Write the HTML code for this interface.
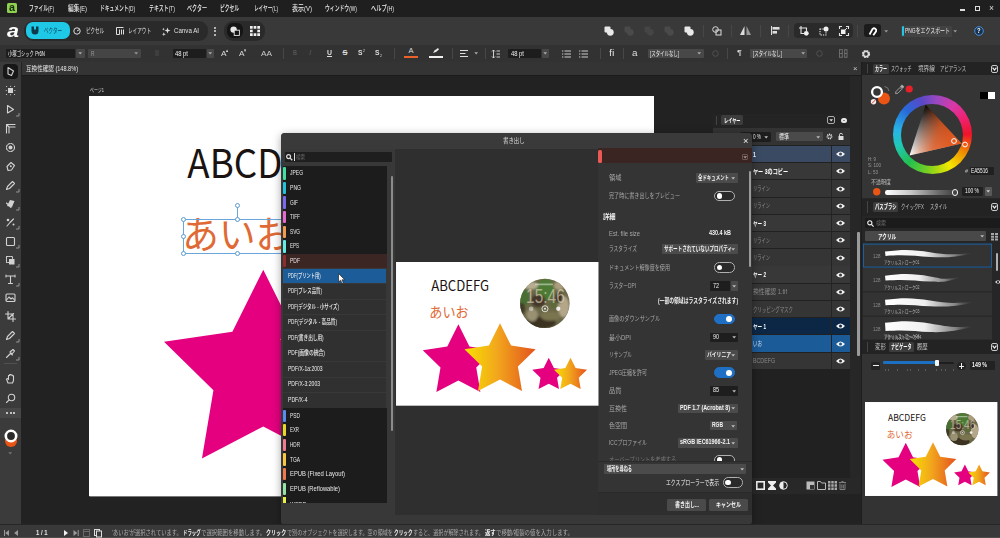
<!DOCTYPE html>
<html lang="ja">
<head>
<meta charset="utf-8">
<title>書き出し</title>
<style>
*{box-sizing:border-box;margin:0;padding:0}
html,body{width:1000px;height:538px;overflow:hidden;background:#222}
body{font-family:"Liberation Sans","Noto Sans CJK JP",sans-serif;font-size:7px;color:#ddd;position:relative;line-height:1}
.a{position:absolute}
.t{position:absolute;white-space:nowrap;transform-origin:0 50%}
svg{position:absolute;overflow:visible}
#menubar{left:0;top:0;width:1000px;height:17px;background:#1f1f1f}
#toolbar{left:0;top:17px;width:1000px;height:28px;background:#393939}
#ctxbar{left:0;top:45px;width:1000px;height:17px;background:#323232}
#tools{left:0;top:62px;width:21px;height:462px;background:#3b3b3b}
#tabbar{left:21.5px;top:61.7px;width:839.5px;height:13.3px;background:#343434}
#canvas{left:21.5px;top:75px;width:840px;height:449px;background:#222222}
#status{left:0;top:524.5px;width:1000px;height:13.5px;background:#393939}
#page{left:89.3px;top:96px;width:565.2px;height:400.4px;background:#fff;overflow:hidden}
#right{left:863px;top:62px;width:137px;height:462px;background:#333}
.fld{position:absolute;background:#1d1d1d;border-radius:1px}
.sel{position:absolute;background:#484848;border-radius:1px}
.sep{position:absolute;width:1px;background:#474747}
.tog{position:absolute;width:20.6px;height:10.6px;border-radius:5.3px;border:1px solid #b0b0b0;background:#2a2a2a}
.tog i{position:absolute;left:1.6px;top:1.4px;width:5.8px;height:5.8px;border-radius:50%;background:#fff}
.tog.on{background:#1f6fc4;border-color:#1f6fc4}
.tog.on i{left:11.2px}
</style>
</head>
<body>

<div id="menubar" class="a"></div>
<div class="a" style="left:7px;top:3px;width:10px;height:10px;background:#8fd14f;border-radius:1.5px"></div>
<div class="t" style="left:9px;top:1.0px;height:14.0px;line-height:14.0px;font-size:10px;color:#143010;font-weight:bold;transform:scaleX(1.079);">a</div>
<div class="t" style="left:29px;top:3.8px;height:10.5px;line-height:10.5px;font-size:7.5px;color:#ececec;font-weight:500;transform:scaleX(0.632);">ファイル(F)</div>
<div class="t" style="left:68px;top:3.8px;height:10.5px;line-height:10.5px;font-size:7.5px;color:#ececec;font-weight:500;transform:scaleX(0.760);">編集(E)</div>
<div class="t" style="left:100px;top:3.8px;height:10.5px;line-height:10.5px;font-size:7.5px;color:#ececec;font-weight:500;transform:scaleX(0.632);">ドキュメント(D)</div>
<div class="t" style="left:149px;top:3.8px;height:10.5px;line-height:10.5px;font-size:7.5px;color:#ececec;font-weight:500;transform:scaleX(0.661);">テキスト(T)</div>
<div class="t" style="left:187px;top:3.8px;height:10.5px;line-height:10.5px;font-size:7.5px;color:#ececec;font-weight:500;transform:scaleX(0.673);">ベクター</div>
<div class="t" style="left:220px;top:3.8px;height:10.5px;line-height:10.5px;font-size:7.5px;color:#ececec;font-weight:500;transform:scaleX(0.633);">ピクセル</div>
<div class="t" style="left:254px;top:3.8px;height:10.5px;line-height:10.5px;font-size:7.5px;color:#ececec;font-weight:500;transform:scaleX(0.616);">レイヤー(L)</div>
<div class="t" style="left:292px;top:3.8px;height:10.5px;line-height:10.5px;font-size:7.5px;color:#ececec;font-weight:500;transform:scaleX(0.800);">表示(V)</div>
<div class="t" style="left:325px;top:3.8px;height:10.5px;line-height:10.5px;font-size:7.5px;color:#ececec;font-weight:500;transform:scaleX(0.645);">ウィンドウ(W)</div>
<div class="t" style="left:371px;top:3.8px;height:10.5px;line-height:10.5px;font-size:7.5px;color:#ececec;font-weight:500;transform:scaleX(0.699);">ヘルプ(H)</div>
<div class="a" style="left:960px;top:9px;width:5px;height:1.5px;background:#ddd;"></div>
<div class="a" style="left:975px;top:5.5px;width:5px;height:5px;border:1px solid #ddd"></div>
<div class="t" style="left:989px;top:1.7px;height:12.6px;line-height:12.6px;font-size:9px;color:#ddd;transform:scaleX(0.950);">×</div>
<div id="toolbar" class="a"></div>
<div class="t" style="left:7px;top:17.7px;height:26.6px;line-height:26.6px;font-size:19px;color:#fff;font-weight:bold;transform:scaleX(1.134);font-style:italic;">a</div>
<div class="a" style="left:24px;top:21px;width:184px;height:20px;background:#2a2a2a;border-radius:9px"></div>
<div class="a" style="left:26px;top:22px;width:44px;height:17px;background:#1ec8e6;border-radius:7px"></div>
<svg style="left:31px;top:26px" width="8" height="9" viewBox="0 0 8 9"><path d="M0.5 0.5 H3 V3.5 H5 V0.5 H7.5 V5 Q7.5 8.5 4 8.5 Q0.5 8.5 0.5 5 Z" fill="#0c3a4a"/></svg>
<div class="t" style="left:44px;top:26.1px;height:9.8px;line-height:9.8px;font-size:7px;color:#0e4a5c;transform:scaleX(0.649);">ベクター</div>
<svg style="left:73px;top:27px" width="8" height="8" viewBox="0 0 8 8"><circle cx="4" cy="4" r="3.2" fill="none" stroke="#ddd" stroke-width="1"/><path d="M4 4 L6.5 2.5" stroke="#ddd" stroke-width="1"/></svg>
<div class="t" style="left:86px;top:26.1px;height:9.8px;line-height:9.8px;font-size:7px;color:#e0e0e0;transform:scaleX(0.643);">ピクセル</div>
<svg style="left:116px;top:27px" width="8" height="8" viewBox="0 0 8 8"><path d="M0.5 0.5 H7.5 M0.5 0.5 V7.5 H3.5 V2.5 M5.5 2.5 V7.5 M7.5 2.5 V7.5" fill="none" stroke="#ddd" stroke-width="1"/></svg>
<div class="t" style="left:128px;top:26.1px;height:9.8px;line-height:9.8px;font-size:7px;color:#e0e0e0;transform:scaleX(0.657);">レイアウト</div>
<svg style="left:162px;top:27px" width="9" height="9" viewBox="0 0 9 9"><path d="M5.5 0.5 L6.3 2.7 L8.5 3.5 L6.3 4.3 L5.5 6.5 L4.7 4.3 L2.5 3.5 L4.7 2.7 Z M1.8 5.2 L2.3 6.7 L3.8 7.2 L2.3 7.7 L1.8 9 L1.3 7.7 L0 7.2 L1.3 6.7Z M1.5 0.8 L1.9 1.8 L2.9 2.2 L1.9 2.6 L1.5 3.6 L1.1 2.6 L0.1 2.2 L1.1 1.8Z" fill="#e0e0e0"/></svg>
<div class="t" style="left:174px;top:26.1px;height:9.8px;line-height:9.8px;font-size:7px;color:#e0e0e0;transform:scaleX(0.880);">Canva AI</div>
<div class="a" style="left:214px;top:26.5px;width:2px;height:2px;background:#ddd;border-radius:1px"></div>
<div class="a" style="left:214px;top:30px;width:2px;height:2px;background:#ddd;border-radius:1px"></div>
<div class="a" style="left:214px;top:33.5px;width:2px;height:2px;background:#ddd;border-radius:1px"></div>
<div class="a" style="left:224px;top:21px;width:41px;height:20px;background:#2a2a2a;border-radius:9px"></div>
<div class="a" style="left:227px;top:23px;width:16px;height:15px;background:#151515;border-radius:6px"></div>
<svg style="left:230px;top:26px" width="10" height="10" viewBox="0 0 10 10"><circle cx="3.6" cy="3.6" r="3.2" fill="#e8e8e8"/><rect x="4.2" y="4.2" width="5.2" height="5.2" fill="#151515" stroke="#e8e8e8" stroke-width="0.9"/></svg>
<svg style="left:250px;top:26px" width="10" height="10" viewBox="0 0 10 10"><path d="M0 0H2.7V2.7H0Z M3.65 0H6.35V2.7H3.65Z M7.3 0H10V2.7H7.3Z M0 3.65H2.7V6.35H0Z M7.3 3.65H10V6.35H7.3Z M0 7.3H2.7V10H0Z M3.65 7.3H6.35V10H3.65Z M7.3 7.3H10V10H7.3Z" fill="#f0f0f0"/></svg>
<svg style="left:604px;top:26px" width="10" height="10" viewBox="0 0 10 10"><rect x="0.5" y="0.5" width="6" height="6" rx="1" fill="#e8e8e8"/><circle cx="6.3" cy="6.3" r="3.4" fill="#e8e8e8"/></svg>
<svg style="left:624px;top:26px" width="10" height="10" viewBox="0 0 10 10"><rect x="0.5" y="0.5" width="6" height="6" rx="1" fill="#4a4a4a"/><circle cx="6.3" cy="6.3" r="3.4" fill="#4a4a4a"/></svg>
<svg style="left:644px;top:26px" width="10" height="10" viewBox="0 0 10 10"><rect x="0.5" y="0.5" width="6" height="6" rx="1" fill="#454545"/><circle cx="6.3" cy="6.3" r="3.4" fill="#454545"/></svg>
<svg style="left:664px;top:26px" width="10" height="10" viewBox="0 0 10 10"><rect x="0.5" y="0.5" width="6" height="6" rx="1" fill="#4a4a4a"/><circle cx="6.3" cy="6.3" r="3.4" fill="#4a4a4a"/></svg>
<svg style="left:684px;top:26px" width="10" height="10" viewBox="0 0 10 10"><rect x="0.5" y="0.5" width="6" height="6" rx="1" fill="#e8e8e8"/><circle cx="6.3" cy="6.3" r="3.4" fill="#e8e8e8"/></svg>
<div class="sep" style="left:703px;top:25px;height:12px"></div>
<svg style="left:712px;top:26px" width="10" height="10" viewBox="0 0 10 10"><circle cx="3.5" cy="3.5" r="2.8" fill="none" stroke="#ddd" stroke-width="1"/><rect x="4" y="4" width="5" height="5" fill="none" stroke="#ddd" stroke-width="1"/></svg>
<div class="sep" style="left:731px;top:25px;height:12px"></div>
<svg style="left:740px;top:26px" width="11" height="9" viewBox="0 0 11 9"><path d="M4.5 0 V9 H0Z" fill="#ddd"/><path d="M6.5 0 V9 H11Z" fill="#999"/></svg>
<div class="sep" style="left:760px;top:25px;height:12px"></div>
<svg style="left:771px;top:26px" width="9" height="9" viewBox="0 0 9 9"><path d="M0.5 0V9" stroke="#ddd" stroke-width="1"/><rect x="1.5" y="1" width="7" height="2.6" fill="#ddd"/><rect x="1.5" y="5" width="4.5" height="2.6" fill="#ddd"/></svg>
<div class="sep" style="left:788px;top:25px;height:12px"></div>
<div class="a" style="left:793.5px;top:22.5px;width:59px;height:15.8px;background:#2a2a2a;border-radius:4px"></div>
<svg style="left:798.5px;top:25.5px" width="10" height="10" viewBox="0 0 10 10"><path d="M2 0V7.5H6M0 2H7.5V5" fill="none" stroke="#e4e4e4" stroke-width="1.1"/><circle cx="7.3" cy="7.3" r="2.4" fill="#f0f0f0"/></svg>
<svg style="left:818.5px;top:25.5px" width="10" height="10" viewBox="0 0 10 10"><rect x="1" y="3" width="6" height="6" fill="none" stroke="#e4e4e4" stroke-width="1.1" stroke-dasharray="1.3 1"/><circle cx="7" cy="3" r="2.5" fill="#f0f0f0"/></svg>
<svg style="left:838.5px;top:25.5px" width="10" height="10" viewBox="0 0 10 10"><path d="M0.5 3V0.5H3M7 0.5H9.5V3M9.5 7V9.5H7M3 9.5H0.5V7" fill="none" stroke="#e4e4e4" stroke-width="1.1"/><rect x="2" y="3.5" width="4.5" height="4.5" fill="#f0f0f0"/><path d="M6 4L8 2" stroke="#e4e4e4" stroke-width="1"/></svg>
<div class="sep" style="left:857px;top:25px;height:12px"></div>
<div class="a" style="left:863.5px;top:23.7px;width:17px;height:13.3px;background:#1b1b1b;border-radius:3px"></div>
<svg style="left:867px;top:26px" width="10" height="10" viewBox="0 0 10 10"><path d="M2 8 L6 3 A2.2 2.2 0 0 1 9 6 L5.5 9.5" fill="none" stroke="#fff" stroke-width="1.8" transform="rotate(-10 5 5)"/></svg>
<svg style="left:883.8px;top:29.7px" width="4.4" height="2.6" viewBox="0 0 5 3"><path d="M0.3 0.2 H4.7 L2.5 2.9 Z" fill="#999"/></svg>
<div class="a" style="left:901px;top:25.5px;width:50.5px;height:11px;background:#424242;border-radius:1px"></div>
<div class="a" style="left:901.5px;top:26px;width:2px;height:10px;background:#1ec8e6;border-radius:1px"></div>
<div class="t" style="left:905px;top:26.1px;height:9.8px;line-height:9.8px;font-size:7px;color:#e8e8e8;transform:scaleX(0.703);">PNGをエクスポート</div>
<svg style="left:952.8px;top:29.7px" width="4.4" height="2.6" viewBox="0 0 5 3"><path d="M0.3 0.2 H4.7 L2.5 2.9 Z" fill="#999"/></svg>
<svg style="left:974px;top:26px" width="10" height="10" viewBox="0 0 10 10"><circle cx="5" cy="5" r="4.3" fill="#16324e" stroke="#4a90d9" stroke-width="1"/></svg>
<div class="t" style="left:977.3px;top:26.4px;height:9.8px;line-height:9.8px;font-size:7px;color:#fff;font-weight:bold;transform:scaleX(0.841);">?</div>
<div id="ctxbar" class="a"></div>
<div class="fld" style="left:6px;top:48.5px;width:69px;height:9.5px"></div>
<div class="t" style="left:8px;top:48.8px;height:9.1px;line-height:9.1px;font-size:6.5px;color:#f0f0f0;transform:scaleX(0.665);">小塚ゴシック Pr6N</div>
<div class="sel" style="left:76px;top:48.5px;width:8.5px;height:9.5px"></div>
<svg style="left:78.1px;top:52.2px" width="4.4" height="2.6" viewBox="0 0 5 3"><path d="M0.3 0.2 H4.7 L2.5 2.9 Z" fill="#aaa"/></svg>
<div class="sel" style="left:88px;top:48.5px;width:53px;height:9.5px;background:#454545"></div>
<div class="t" style="left:91px;top:48.8px;height:9.1px;line-height:9.1px;font-size:6.5px;color:#999;transform:scaleX(0.744);">R</div>
<svg style="left:133.8px;top:52.2px" width="4.4" height="2.6" viewBox="0 0 5 3"><path d="M0.3 0.2 H4.7 L2.5 2.9 Z" fill="#999"/></svg>
<div class="a" style="left:155px;top:50px;width:4px;height:6px;background:#3e3e3e;"></div>
<div class="fld" style="left:172.5px;top:48.5px;width:33px;height:9.5px"></div>
<div class="t" style="left:175px;top:48.8px;height:9.1px;line-height:9.1px;font-size:6.5px;color:#f0f0f0;transform:scaleX(0.898);">48 pt</div>
<div class="sel" style="left:206.5px;top:48.5px;width:7px;height:9.5px"></div>
<svg style="left:207.8px;top:52.2px" width="4.4" height="2.6" viewBox="0 0 5 3"><path d="M0.3 0.2 H4.7 L2.5 2.9 Z" fill="#aaa"/></svg>
<div class="t" style="left:220.5px;top:48.0px;height:11.2px;line-height:11.2px;font-size:8px;color:#ddd;transform:scaleX(1.029);">A</div>
<div class="t" style="left:226.3px;top:47.9px;height:6.3px;line-height:6.3px;font-size:4.5px;color:#ddd;transform:scaleX(0.833);">▴</div>
<div class="t" style="left:238.5px;top:48.0px;height:11.2px;line-height:11.2px;font-size:8px;color:#ddd;transform:scaleX(1.029);">A</div>
<div class="t" style="left:244.3px;top:47.9px;height:6.3px;line-height:6.3px;font-size:4.5px;color:#ddd;transform:scaleX(0.833);">▾</div>
<div class="t" style="left:261px;top:48.6px;height:9.8px;line-height:9.8px;font-size:7px;color:#ccc;transform:scaleX(1.177);">AA</div>
<div class="sep" style="left:283px;top:48px;height:11px"></div>
<div class="t" style="left:293px;top:48.4px;height:9.8px;line-height:9.8px;font-size:7px;color:#555;font-weight:bold;transform:scaleX(0.790);">B</div>
<div class="t" style="left:309px;top:48.4px;height:9.8px;line-height:9.8px;font-size:7px;color:#555;transform:scaleX(1.280);font-style:italic;">I</div>
<div class="t" style="left:326.5px;top:48.0px;height:10.5px;line-height:10.5px;font-size:7.5px;color:#ddd;font-weight:bold;transform:scaleX(0.922);text-decoration:underline;">U</div>
<div class="t" style="left:342.5px;top:48.0px;height:10.5px;line-height:10.5px;font-size:7.5px;color:#ddd;font-weight:bold;text-decoration:line-through;">S</div>
<div class="t" style="left:357.5px;top:48.0px;height:10.5px;line-height:10.5px;font-size:7.5px;color:#ddd;font-weight:bold;transform:scaleX(0.897);">S</div>
<div class="t" style="left:362.5px;top:48.2px;height:5.6px;line-height:5.6px;font-size:4px;color:#ddd;transform:scaleX(0.895);">2</div>
<div class="t" style="left:374.5px;top:48.0px;height:10.5px;line-height:10.5px;font-size:7.5px;color:#ddd;font-weight:bold;transform:scaleX(0.897);">S</div>
<div class="t" style="left:379.5px;top:52.7px;height:5.6px;line-height:5.6px;font-size:4px;color:#ddd;transform:scaleX(0.895);">2</div>
<div class="sep" style="left:394px;top:48px;height:11px"></div>
<div class="t" style="left:408.5px;top:46.2px;height:10.5px;line-height:10.5px;font-size:7.5px;color:#ddd;">A</div>
<div class="a" style="left:404px;top:56.3px;width:14px;height:1.8px;background:#e8622a;"></div>
<svg style="left:432px;top:47px" width="8" height="8" viewBox="0 0 8 8"><path d="M1 6 L2.5 3.5 L6 1 L7 2.5 L4 5 Z" fill="#e8e8e8"/></svg>
<div class="a" style="left:429px;top:56.3px;width:14px;height:1.8px;background:#f0f0f0;"></div>
<div class="sep" style="left:452px;top:48px;height:11px"></div>
<svg style="left:460px;top:50px" width="8" height="7" viewBox="0 0 8 7"><path d="M0 0.5H8M0 3.5H5.5M0 6.5H8" stroke="#ddd" stroke-width="1"/></svg>
<svg style="left:473.8px;top:52.2px" width="4.4" height="2.6" viewBox="0 0 5 3"><path d="M0.3 0.2 H4.7 L2.5 2.9 Z" fill="#aaa"/></svg>
<div class="sep" style="left:485px;top:48px;height:11px"></div>
<svg style="left:492px;top:49.5px" width="8" height="8" viewBox="0 0 8 8"><path d="M1.5 0V8M0 1.5L1.5 0L3 1.5M0 6.5L1.5 8L3 6.5M4.5 1H8M4.5 4H8M4.5 7H8" fill="none" stroke="#ddd" stroke-width="0.9"/></svg>
<div class="fld" style="left:508px;top:48.5px;width:32.5px;height:9.5px"></div>
<div class="t" style="left:510.5px;top:48.8px;height:9.1px;line-height:9.1px;font-size:6.5px;color:#f0f0f0;transform:scaleX(0.898);">48 pt</div>
<div class="sel" style="left:541.5px;top:48.5px;width:7px;height:9.5px"></div>
<svg style="left:542.8px;top:52.2px" width="4.4" height="2.6" viewBox="0 0 5 3"><path d="M0.3 0.2 H4.7 L2.5 2.9 Z" fill="#aaa"/></svg>
<svg style="left:562px;top:49.5px" width="9" height="8" viewBox="0 0 9 8"><path d="M2.5 1H9M2.5 4H9M2.5 7H9" stroke="#ccc" stroke-width="1"/><path d="M0 1H1.3M0 4H1.3M0 7H1.3" stroke="#ccc" stroke-width="1"/></svg>
<svg style="left:579px;top:49.5px" width="9" height="8" viewBox="0 0 9 8"><path d="M2.5 1H9M2.5 4H9M2.5 7H9" stroke="#ccc" stroke-width="1"/><path d="M0 1H1.3M0 4H1.3M0 7H1.3" stroke="#ccc" stroke-width="1"/></svg>
<div class="sep" style="left:600px;top:48px;height:11px"></div>
<div class="t" style="left:609.3px;top:46.1px;height:13.3px;line-height:13.3px;font-size:9.5px;color:#ddd;transform:scaleX(1.158);">fi</div>
<div class="sep" style="left:623px;top:48px;height:11px"></div>
<div class="t" style="left:632.3px;top:45.9px;height:13.3px;line-height:13.3px;font-size:9.5px;color:#ddd;transform:scaleX(1.038);">a</div>
<div class="sel" style="left:648px;top:48.5px;width:56px;height:9.5px"></div>
<div class="t" style="left:650px;top:48.8px;height:9.1px;line-height:9.1px;font-size:6.5px;color:#eee;transform:scaleX(0.680);">[スタイルなし]</div>
<svg style="left:697.3px;top:52.2px" width="4.4" height="2.6" viewBox="0 0 5 3"><path d="M0.3 0.2 H4.7 L2.5 2.9 Z" fill="#aaa"/></svg>
<svg style="left:712px;top:50px" width="7" height="7" viewBox="0 0 7 7"><circle cx="3.5" cy="3.5" r="2.8" fill="none" stroke="#505050" stroke-width="1"/></svg>
<div class="sep" style="left:727px;top:48px;height:11px"></div>
<div class="t" style="left:736.5px;top:47.4px;height:11.2px;line-height:11.2px;font-size:8px;color:#ddd;transform:scaleX(1.164);">¶</div>
<div class="sel" style="left:750px;top:48.5px;width:57px;height:9.5px"></div>
<div class="t" style="left:752.5px;top:48.8px;height:9.1px;line-height:9.1px;font-size:6.5px;color:#eee;transform:scaleX(0.680);">[スタイルなし]</div>
<svg style="left:800.8px;top:52.2px" width="4.4" height="2.6" viewBox="0 0 5 3"><path d="M0.3 0.2 H4.7 L2.5 2.9 Z" fill="#aaa"/></svg>
<svg style="left:816px;top:50px" width="7" height="7" viewBox="0 0 7 7"><circle cx="3.5" cy="3.5" r="2.8" fill="none" stroke="#505050" stroke-width="1"/></svg>
<svg style="left:838.5px;top:49px" width="8.5" height="9" viewBox="0 0 9 9"><path d="M0.5 0V9M3.5 0V9M6 0V9M8.5 0V9M0.5 0.5H3.5M6 0.5H8.5M0.5 4.5H3.5M6 4.5H8.5M0.5 8.5H3.5M6 8.5H8.5" fill="none" stroke="#777" stroke-width="0.9"/></svg>
<svg style="left:861px;top:48.5px" width="10" height="10" viewBox="0 0 10 10"><circle cx="5" cy="5" r="3" fill="none" stroke="#ddd" stroke-width="2.2" stroke-dasharray="1.6 0.76"/><circle cx="5" cy="5" r="2.6" fill="none" stroke="#ddd" stroke-width="1.4"/></svg>
<div id="tools" class="a"></div>
<div id="tabbar" class="a"></div>
<div class="t" style="left:26px;top:64.0px;height:9.1px;line-height:9.1px;font-size:6.5px;color:#e8e8e8;transform:scaleX(0.857);">互換性確認 (148.8%)</div>
<div class="t" style="left:852.5px;top:62.9px;height:11.2px;line-height:11.2px;font-size:8px;color:#ccc;transform:scaleX(0.963);">×</div>
<div id="canvas" class="a"></div>
<div class="a" style="left:21.5px;top:75px;width:839.5px;height:1.2px;background:#1b1b1b;"></div>
<div class="a" style="left:3px;top:64px;width:15px;height:15px;background:#171717;border-radius:4px"></div>
<svg style="left:5.0px;top:65.5px" width="11" height="11" viewBox="0 0 11 11"><path d="M3 1.5 L8.5 5 L6.5 9.5 L3 8 Z" fill="none" stroke="#d2d2d2" stroke-width="1.1" stroke-linejoin="round" stroke-linecap="round"/></svg>
<svg style="left:5.0px;top:84.5px" width="11" height="11" viewBox="0 0 11 11"><rect x="3" y="3" width="5" height="5" fill="#d2d2d2"/><path d="M1.5 1.5h0.1M5.5 1.2h0.1M9.5 1.5h0.1M1.2 5.5h0.1M9.8 5.5h0.1M1.5 9.5h0.1M5.5 9.8h0.1M9.5 9.5h0.1" fill="none" stroke="#d2d2d2" stroke-width="1.1" stroke-linejoin="round" stroke-linecap="round" stroke-width="1.5"/></svg>
<svg style="left:5.0px;top:103.5px" width="11" height="11" viewBox="0 0 11 11"><path d="M2.5 1.5 L8.5 5.5 L2.5 9 Z" fill="none" stroke="#d2d2d2" stroke-width="1.1" stroke-linejoin="round" stroke-linecap="round"/></svg>
<svg style="left:5.0px;top:122.5px" width="11" height="11" viewBox="0 0 11 11"><path d="M1.5 10V1.5H10M4 10V4H10M4 4L1.5 1.5" fill="none" stroke="#d2d2d2" stroke-width="1.1" stroke-linejoin="round" stroke-linecap="round"/></svg>
<svg style="left:5.0px;top:141.5px" width="11" height="11" viewBox="0 0 11 11"><circle cx="5.5" cy="5.5" r="4" fill="none" stroke="#d2d2d2" stroke-width="1.1" stroke-linejoin="round" stroke-linecap="round" stroke-dasharray="2 1.2"/><circle cx="5.5" cy="5.5" r="2" fill="#d2d2d2"/></svg>
<svg style="left:5.0px;top:160.5px" width="11" height="11" viewBox="0 0 11 11"><path d="M3 9.5 L2 5.5 L6 1.5 L9.5 4.5 L6.5 9 Z" fill="none" stroke="#d2d2d2" stroke-width="1.1" stroke-linejoin="round" stroke-linecap="round"/><circle cx="5.8" cy="5.3" r="1" fill="#d2d2d2"/></svg>
<svg style="left:5.0px;top:179.5px" width="11" height="11" viewBox="0 0 11 11"><path d="M1.5 9.5 L2.5 6.5 L7.5 1.5 L9.5 3.5 L4.5 8.5 Z" fill="none" stroke="#d2d2d2" stroke-width="1.1" stroke-linejoin="round" stroke-linecap="round"/></svg>
<svg style="left:5.0px;top:197.5px" width="11" height="11" viewBox="0 0 11 11"><path d="M2 8 L5 2 L9.5 3 L7 9 Z" fill="#d2d2d2"/><path d="M1.5 5 L6 9.5" fill="none" stroke="#d2d2d2" stroke-width="1.1" stroke-linejoin="round" stroke-linecap="round"/></svg>
<svg style="left:5.0px;top:216.5px" width="11" height="11" viewBox="0 0 11 11"><path d="M2 9 L5 5.5 L8.5 2" fill="none" stroke="#d2d2d2" stroke-width="1.1" stroke-linejoin="round" stroke-linecap="round" stroke-width="2"/><circle cx="3" cy="3" r="1.3" fill="#d2d2d2"/><circle cx="8.5" cy="7.5" r="1" fill="#d2d2d2"/></svg>
<svg style="left:5.0px;top:235.5px" width="11" height="11" viewBox="0 0 11 11"><rect x="1.5" y="1.5" width="8" height="8" rx="1" fill="none" stroke="#d2d2d2" stroke-width="1.1" stroke-linejoin="round" stroke-linecap="round" stroke-width="1.3"/></svg>
<svg style="left:5.0px;top:254.5px" width="11" height="11" viewBox="0 0 11 11"><rect x="1.5" y="1.5" width="6" height="6" fill="none" stroke="#d2d2d2" stroke-width="1.1" stroke-linejoin="round" stroke-linecap="round" stroke-dasharray="1.2 1"/><rect x="4" y="4" width="5.5" height="5.5" fill="#d2d2d2"/></svg>
<svg style="left:5.0px;top:273.5px" width="11" height="11" viewBox="0 0 11 11"><path d="M2 2H9M5.5 2V9.5M1 1v2M10 1v2M3.5 9.5H7.5" fill="none" stroke="#d2d2d2" stroke-width="1.1" stroke-linejoin="round" stroke-linecap="round"/></svg>
<svg style="left:5.0px;top:291.5px" width="11" height="11" viewBox="0 0 11 11"><rect x="1" y="2" width="9" height="7.5" rx="1" fill="none" stroke="#d2d2d2" stroke-width="1.1" stroke-linejoin="round" stroke-linecap="round"/><path d="M1.5 8 L4 5 L6 7 L7.5 5.8 L9.5 8" fill="none" stroke="#d2d2d2" stroke-width="1.1" stroke-linejoin="round" stroke-linecap="round"/></svg>
<svg style="left:5.0px;top:310.5px" width="11" height="11" viewBox="0 0 11 11"><path d="M3 0.5V8H10.5M0.5 3H8V10.5M3 8L8.5 2.5" fill="none" stroke="#d2d2d2" stroke-width="1.1" stroke-linejoin="round" stroke-linecap="round"/></svg>
<svg style="left:5.0px;top:329.5px" width="11" height="11" viewBox="0 0 11 11"><path d="M1.5 9.5 L2.5 6.5 L7.5 1.5 L9.5 3.5 L4.5 8.5 Z" fill="none" stroke="#d2d2d2" stroke-width="1.1" stroke-linejoin="round" stroke-linecap="round"/></svg>
<svg style="left:5.0px;top:347.5px" width="11" height="11" viewBox="0 0 11 11"><path d="M1.5 9.5 L5.5 5.5 L7.5 7 M5 4 L8 1.5 L9.5 3 L7 6 Z" fill="none" stroke="#d2d2d2" stroke-width="1.1" stroke-linejoin="round" stroke-linecap="round"/></svg>
<div class="a" style="left:4px;top:362.5px;width:13px;height:1px;background:#505050;"></div>
<svg style="left:5.0px;top:372.5px" width="11" height="11" viewBox="0 0 11 11"><path d="M3 10 L1.5 6 L3 5.5 L3.5 6.5 V2.5 H4.7 V1.5 H6 V2 H7.3 V2.8 H8.5 V7.5 L7.5 10 Z" fill="none" stroke="#d2d2d2" stroke-width="1.1" stroke-linejoin="round" stroke-linecap="round"/></svg>
<svg style="left:5.0px;top:392.5px" width="11" height="11" viewBox="0 0 11 11"><circle cx="6.5" cy="4.5" r="3.2" fill="none" stroke="#d2d2d2" stroke-width="1.1" stroke-linejoin="round" stroke-linecap="round"/><path d="M4.2 6.8 L1.5 9.5" fill="none" stroke="#d2d2d2" stroke-width="1.1" stroke-linejoin="round" stroke-linecap="round" stroke-width="1.6"/></svg>
<div class="a" style="left:0px;top:407.5px;width:21px;height:10.5px;background:#474747;"></div>
<div class="a" style="left:6px;top:412px;width:2px;height:2px;background:#e8e8e8;border-radius:1px"></div>
<div class="a" style="left:9.5px;top:412px;width:2px;height:2px;background:#e8e8e8;border-radius:1px"></div>
<div class="a" style="left:13px;top:412px;width:2px;height:2px;background:#e8e8e8;border-radius:1px"></div>
<svg style="left:2.5px;top:428px" width="16" height="22" viewBox="0 0 16 22"><circle cx="8" cy="13" r="6" fill="#ea5516"/><circle cx="8" cy="8" r="5.2" fill="#2a2a2a" stroke="#fff" stroke-width="2.6"/></svg>
<svg style="left:8.3px;top:451.7px" width="4.4" height="2.6" viewBox="0 0 5 3"><path d="M0.3 0.2 H4.7 L2.5 2.9 Z" fill="#777"/></svg>
<svg style="left:15.5px;top:113px" width="3" height="3" viewBox="0 0 3 3"><path d="M0 3H3V0" fill="none" stroke="#aaa" stroke-width="0.8"/></svg>
<svg style="left:15.5px;top:189px" width="3" height="3" viewBox="0 0 3 3"><path d="M0 3H3V0" fill="none" stroke="#aaa" stroke-width="0.8"/></svg>
<svg style="left:15.5px;top:207px" width="3" height="3" viewBox="0 0 3 3"><path d="M0 3H3V0" fill="none" stroke="#aaa" stroke-width="0.8"/></svg>
<svg style="left:15.5px;top:226px" width="3" height="3" viewBox="0 0 3 3"><path d="M0 3H3V0" fill="none" stroke="#aaa" stroke-width="0.8"/></svg>
<svg style="left:15.5px;top:245px" width="3" height="3" viewBox="0 0 3 3"><path d="M0 3H3V0" fill="none" stroke="#aaa" stroke-width="0.8"/></svg>
<svg style="left:15.5px;top:264px" width="3" height="3" viewBox="0 0 3 3"><path d="M0 3H3V0" fill="none" stroke="#aaa" stroke-width="0.8"/></svg>
<svg style="left:15.5px;top:283px" width="3" height="3" viewBox="0 0 3 3"><path d="M0 3H3V0" fill="none" stroke="#aaa" stroke-width="0.8"/></svg>
<svg style="left:15.5px;top:339px" width="3" height="3" viewBox="0 0 3 3"><path d="M0 3H3V0" fill="none" stroke="#aaa" stroke-width="0.8"/></svg>
<svg style="left:15.5px;top:357px" width="3" height="3" viewBox="0 0 3 3"><path d="M0 3H3V0" fill="none" stroke="#aaa" stroke-width="0.8"/></svg>
<div class="t" style="left:90px;top:87.2px;height:7.7px;line-height:7.7px;font-size:5.5px;color:#d8d8d8;transform:scaleX(0.720);">ページ1</div>
<div id="page" class="a">
</div>
<svg style="left:89.3px;top:96px" width="565.2" height="400.4" viewBox="0 0 565 401"><defs><linearGradient id="mg" x1="0" y1="0" x2="1" y2="0"><stop offset="0" stop-color="#f8e000"/><stop offset="0.45" stop-color="#f2a81c"/><stop offset="1" stop-color="#e4521e"/></linearGradient><clipPath id="mc"><circle cx="415.2" cy="115.5" r="69"/></clipPath><filter id="mf" x="-20%" y="-20%" width="140%" height="140%"><feGaussianBlur stdDeviation="3.2"/></filter></defs><rect width="565" height="401" fill="#fff"/><text x="98" y="81.8" font-family="Noto Sans CJK JP, Liberation Sans, sans-serif" font-size="39.5" fill="#1a1311" textLength="162" lengthAdjust="spacingAndGlyphs">ABCDEFG</text><text x="93" y="152.6" font-family="Noto Sans CJK JP, Liberation Sans, sans-serif" font-weight="400" font-size="38" fill="#df6a35" textLength="110" lengthAdjust="spacingAndGlyphs">あいお</text><polygon points="174.0,174.0 204.9,236.0 273.4,246.2 223.9,294.7 235.4,363.0 174.0,331.0 112.6,363.0 124.1,294.7 74.6,246.2 143.1,236.0" fill="#e4007f"/><polygon points="290.2,171.2 321.1,233.2 389.6,243.4 340.1,291.9 351.6,360.2 290.2,328.2 228.8,360.2 240.3,291.9 190.8,243.4 259.3,233.2" fill="url(#mg)"/><polygon points="426.3,267.0 440.6,295.8 472.4,300.5 449.4,323.0 454.8,354.7 426.3,339.8 397.8,354.7 403.2,323.0 380.2,300.5 412.0,295.8" fill="#e4007f"/><polygon points="486.9,267.0 501.2,295.8 533.0,300.5 510.0,323.0 515.4,354.7 486.9,339.8 458.4,354.7 463.8,323.0 440.8,300.5 472.6,295.8" fill="url(#mg)"/><g clip-path="url(#mc)"><rect x="340" y="40" width="150" height="150" fill="#6b6848"/><g filter="url(#mf)"><ellipse cx="417" cy="77" rx="25" ry="30" fill="#4d7a35"/><ellipse cx="357" cy="98" rx="15" ry="24" fill="#4a6e30"/><ellipse cx="377" cy="66" rx="19" ry="11" fill="#b6ad90"/><ellipse cx="468" cy="125" rx="16" ry="30" fill="#b3a689"/><ellipse cx="455" cy="66" rx="15" ry="12" fill="#aa9e7e"/><ellipse cx="397" cy="108" rx="20" ry="18" fill="#45392a"/><ellipse cx="404" cy="169" rx="42" ry="17" fill="#3a3124"/><ellipse cx="455" cy="101" rx="10" ry="14" fill="#3a3226"/><ellipse cx="431" cy="151" rx="28" ry="13" fill="#7a7450"/><ellipse cx="380" cy="148" rx="16" ry="18" fill="#9a9072"/><ellipse cx="350" cy="130" rx="10" ry="16" fill="#3f3a28"/><ellipse cx="440" cy="118" rx="12" ry="10" fill="#5c6a38"/></g></g><rect x="388" y="60" width="50" height="5" rx="2" fill="#fff" fill-opacity=".45"/><text x="363" y="114" font-family="Liberation Sans, sans-serif" font-size="56" fill="#e8dcc4" fill-opacity="0.62" textLength="108" lengthAdjust="spacingAndGlyphs">15:46</text><circle cx="377" cy="130.5" r="6.5" fill="#fff" fill-opacity=".45"/><circle cx="415.7" cy="130.5" r="8.5" fill="none" stroke="#fff" stroke-opacity=".85" stroke-width="2.5"/><circle cx="415.7" cy="130.5" r="3" fill="#fff" fill-opacity=".8"/><circle cx="452.8" cy="130.5" r="6" fill="#fff" fill-opacity=".85"/></svg>
<div class="a" style="left:183px;top:219px;width:108px;height:34.5px;border:1px solid #6aa5dc"></div>
<div class="a" style="left:236.5px;top:205px;width:1px;height:14px;background:#6aa5dc;"></div>
<div class="a" style="left:181px;top:217px;width:5px;height:5px;border-radius:50%;border:1px solid #5b9bd5;background:#fff"></div>
<div class="a" style="left:234.7px;top:217px;width:5px;height:5px;border-radius:50%;border:1px solid #5b9bd5;background:#fff"></div>
<div class="a" style="left:181px;top:234.2px;width:5px;height:5px;border-radius:50%;border:1px solid #5b9bd5;background:#fff"></div>
<div class="a" style="left:181px;top:251px;width:5px;height:5px;border-radius:50%;border:1px solid #5b9bd5;background:#fff"></div>
<div class="a" style="left:234.7px;top:251px;width:5px;height:5px;border-radius:50%;border:1px solid #5b9bd5;background:#fff"></div>
<div class="a" style="left:234.7px;top:202.5px;width:5px;height:5px;border-radius:50%;border:1px solid #5b9bd5;background:#fff"></div>
<div class="a" style="left:713px;top:113px;width:147px;height:381px;background:#212121;"></div>
<div class="a" style="left:849.6px;top:76px;width:11px;height:418px;background:#272727;"></div>
<div class="a" style="left:713px;top:114px;width:137px;height:13.5px;background:#242424;"></div>
<div class="a" style="left:721px;top:114.7px;width:21.5px;height:10.6px;background:#3c3c3c;border-radius:1.5px"></div>
<div class="t" style="left:723.5px;top:115.5px;height:9.1px;line-height:9.1px;font-size:6.5px;color:#fff;font-weight:bold;transform:scaleX(0.639);">レイヤー</div>
<div class="a" style="left:715.8px;top:115.5px;width:1.2px;height:9px;background:#444;"></div>
<div class="a" style="left:827px;top:116px;width:8px;height:8px;border:1px solid #aaa;border-radius:2px"></div>
<svg style="left:828.8px;top:118.9px" width="4.4" height="2.6" viewBox="0 0 5 3"><path d="M0.3 0.2 H4.7 L2.5 2.9 Z" fill="#ddd"/></svg>
<div class="a" style="left:841.2px;top:117.7px;width:5.6px;height:5.6px;background:#e8e8e8;border-radius:50%"></div>
<div class="a" style="left:843.1px;top:119.6px;width:1.8px;height:1.8px;background:#777;border-radius:50%"></div>
<div class="a" style="left:713px;top:128px;width:137px;height:16.5px;background:#333;"></div>
<div class="a" style="left:740px;top:132px;width:30.5px;height:9.6px;background:#1d1d1d;border-radius:2px"></div>
<div class="t" style="left:753px;top:132.2px;height:9.1px;line-height:9.1px;font-size:6.5px;color:#eee;transform:scaleX(0.714);">0 %</div>
<svg style="left:763.8px;top:135.7px" width="4.4" height="2.6" viewBox="0 0 5 3"><path d="M0.3 0.2 H4.7 L2.5 2.9 Z" fill="#bbb"/></svg>
<div class="a" style="left:776px;top:132.2px;width:46.8px;height:9.2px;background:#4a4a4a;border-radius:1px"></div>
<div class="t" style="left:779px;top:132.2px;height:9.1px;line-height:9.1px;font-size:6.5px;color:#eee;transform:scaleX(0.769);">標準</div>
<svg style="left:815.8px;top:135.7px" width="4.4" height="2.6" viewBox="0 0 5 3"><path d="M0.3 0.2 H4.7 L2.5 2.9 Z" fill="#bbb"/></svg>
<svg style="left:826.2px;top:133.3px" width="7" height="7" viewBox="0 0 7 7"><circle cx="3.5" cy="3.5" r="2" fill="none" stroke="#ddd" stroke-width="1.8" stroke-dasharray="1 0.6"/></svg>
<svg style="left:838px;top:132.8px" width="6" height="7" viewBox="0 0 6 7"><rect x="0.5" y="3" width="5" height="4" fill="#ddd"/><path d="M1.5 3V1.8a1.5 1.5 0 0 1 3 0" fill="none" stroke="#ddd" stroke-width="0.9"/></svg>
<div class="a" style="left:716px;top:145.9px;width:134px;height:16.4px;background:#3a4a63;"></div>
<div class="a" style="left:831.2px;top:145.9px;width:1px;height:16.4px;background:#242424;"></div>
<div class="t" style="left:753px;top:149.7px;height:9.1px;line-height:9.1px;font-size:6.5px;color:#fff;font-weight:bold;transform:scaleX(0.828);">1</div>
<svg style="left:836.2px;top:151.2px" width="9" height="6" viewBox="0 0 9 6"><path d="M0 3 Q4.5 -2 9 3 Q4.5 8 0 3Z" fill="#f2f2f2"/><circle cx="4.5" cy="3" r="1.5" fill="#3a4a63"/></svg>
<div class="a" style="left:716px;top:163.1px;width:134px;height:16.4px;background:#383838;"></div>
<div class="a" style="left:831.2px;top:163.1px;width:1px;height:16.4px;background:#242424;"></div>
<div class="t" style="left:753px;top:166.9px;height:9.1px;line-height:9.1px;font-size:6.5px;color:#fff;font-weight:bold;transform:scaleX(0.788);">ヤー 3のコピー</div>
<svg style="left:836.2px;top:168.4px" width="9" height="6" viewBox="0 0 9 6"><path d="M0 3 Q4.5 -2 9 3 Q4.5 8 0 3Z" fill="#f2f2f2"/><circle cx="4.5" cy="3" r="1.5" fill="#383838"/></svg>
<div class="a" style="left:716px;top:180.3px;width:134px;height:16.4px;background:#353535;"></div>
<div class="a" style="left:831.2px;top:180.3px;width:1px;height:16.4px;background:#242424;"></div>
<div class="t" style="left:753px;top:184.1px;height:9.1px;line-height:9.1px;font-size:6.5px;color:#8a8a8a;transform:scaleX(0.654);">リライン</div>
<svg style="left:836.2px;top:185.6px" width="9" height="6" viewBox="0 0 9 6"><path d="M0 3 Q4.5 -2 9 3 Q4.5 8 0 3Z" fill="#f2f2f2"/><circle cx="4.5" cy="3" r="1.5" fill="#353535"/></svg>
<div class="a" style="left:716px;top:197.6px;width:134px;height:16.4px;background:#353535;"></div>
<div class="a" style="left:831.2px;top:197.6px;width:1px;height:16.4px;background:#242424;"></div>
<div class="t" style="left:753px;top:201.3px;height:9.1px;line-height:9.1px;font-size:6.5px;color:#8a8a8a;transform:scaleX(0.654);">リライン</div>
<svg style="left:836.2px;top:202.9px" width="9" height="6" viewBox="0 0 9 6"><path d="M0 3 Q4.5 -2 9 3 Q4.5 8 0 3Z" fill="#f2f2f2"/><circle cx="4.5" cy="3" r="1.5" fill="#353535"/></svg>
<div class="a" style="left:716px;top:214.8px;width:134px;height:16.4px;background:#383838;"></div>
<div class="a" style="left:831.2px;top:214.8px;width:1px;height:16.4px;background:#242424;"></div>
<div class="t" style="left:753px;top:218.5px;height:9.1px;line-height:9.1px;font-size:6.5px;color:#fff;font-weight:bold;transform:scaleX(0.706);">ヤー 3</div>
<svg style="left:836.2px;top:220.1px" width="9" height="6" viewBox="0 0 9 6"><path d="M0 3 Q4.5 -2 9 3 Q4.5 8 0 3Z" fill="#f2f2f2"/><circle cx="4.5" cy="3" r="1.5" fill="#383838"/></svg>
<div class="a" style="left:716px;top:232.0px;width:134px;height:16.4px;background:#353535;"></div>
<div class="a" style="left:831.2px;top:232.0px;width:1px;height:16.4px;background:#242424;"></div>
<div class="t" style="left:753px;top:235.8px;height:9.1px;line-height:9.1px;font-size:6.5px;color:#8a8a8a;transform:scaleX(0.654);">リライン</div>
<svg style="left:836.2px;top:237.3px" width="9" height="6" viewBox="0 0 9 6"><path d="M0 3 Q4.5 -2 9 3 Q4.5 8 0 3Z" fill="#f2f2f2"/><circle cx="4.5" cy="3" r="1.5" fill="#353535"/></svg>
<div class="a" style="left:716px;top:249.2px;width:134px;height:16.4px;background:#353535;"></div>
<div class="a" style="left:831.2px;top:249.2px;width:1px;height:16.4px;background:#242424;"></div>
<div class="t" style="left:753px;top:253.0px;height:9.1px;line-height:9.1px;font-size:6.5px;color:#8a8a8a;transform:scaleX(0.654);">リライン</div>
<svg style="left:836.2px;top:254.5px" width="9" height="6" viewBox="0 0 9 6"><path d="M0 3 Q4.5 -2 9 3 Q4.5 8 0 3Z" fill="#f2f2f2"/><circle cx="4.5" cy="3" r="1.5" fill="#353535"/></svg>
<div class="a" style="left:716px;top:266.4px;width:134px;height:16.4px;background:#383838;"></div>
<div class="a" style="left:831.2px;top:266.4px;width:1px;height:16.4px;background:#242424;"></div>
<div class="t" style="left:753px;top:270.2px;height:9.1px;line-height:9.1px;font-size:6.5px;color:#fff;font-weight:bold;transform:scaleX(0.706);">ヤー 2</div>
<svg style="left:836.2px;top:271.8px" width="9" height="6" viewBox="0 0 9 6"><path d="M0 3 Q4.5 -2 9 3 Q4.5 8 0 3Z" fill="#f2f2f2"/><circle cx="4.5" cy="3" r="1.5" fill="#383838"/></svg>
<div class="a" style="left:716px;top:283.7px;width:134px;height:16.4px;background:#353535;"></div>
<div class="a" style="left:831.2px;top:283.7px;width:1px;height:16.4px;background:#242424;"></div>
<div class="t" style="left:753px;top:287.4px;height:9.1px;line-height:9.1px;font-size:6.5px;color:#8a8a8a;transform:scaleX(0.888);">換性確認 1.tif</div>
<svg style="left:836.2px;top:289.0px" width="9" height="6" viewBox="0 0 9 6"><path d="M0 3 Q4.5 -2 9 3 Q4.5 8 0 3Z" fill="#f2f2f2"/><circle cx="4.5" cy="3" r="1.5" fill="#353535"/></svg>
<div class="a" style="left:716px;top:300.9px;width:134px;height:16.4px;background:#353535;"></div>
<div class="a" style="left:831.2px;top:300.9px;width:1px;height:16.4px;background:#242424;"></div>
<div class="t" style="left:753px;top:304.6px;height:9.1px;line-height:9.1px;font-size:6.5px;color:#8a8a8a;transform:scaleX(0.684);">クリッピングマスク</div>
<svg style="left:836.2px;top:306.2px" width="9" height="6" viewBox="0 0 9 6"><path d="M0 3 Q4.5 -2 9 3 Q4.5 8 0 3Z" fill="#f2f2f2"/><circle cx="4.5" cy="3" r="1.5" fill="#353535"/></svg>
<div class="a" style="left:716px;top:318.1px;width:134px;height:16.4px;background:#0c2746;"></div>
<div class="a" style="left:831.2px;top:318.1px;width:1px;height:16.4px;background:#242424;"></div>
<div class="t" style="left:753px;top:321.9px;height:9.1px;line-height:9.1px;font-size:6.5px;color:#fff;font-weight:bold;transform:scaleX(0.706);">ヤー 1</div>
<svg style="left:836.2px;top:323.4px" width="9" height="6" viewBox="0 0 9 6"><path d="M0 3 Q4.5 -2 9 3 Q4.5 8 0 3Z" fill="#f2f2f2"/><circle cx="4.5" cy="3" r="1.5" fill="#0c2746"/></svg>
<div class="a" style="left:716px;top:335.3px;width:134px;height:16.4px;background:#1b5b98;"></div>
<div class="a" style="left:831.2px;top:335.3px;width:1px;height:16.4px;background:#242424;"></div>
<div class="t" style="left:753px;top:339.1px;height:9.1px;line-height:9.1px;font-size:6.5px;color:#cfe0f0;transform:scaleX(0.692);">いお</div>
<svg style="left:836.2px;top:340.6px" width="9" height="6" viewBox="0 0 9 6"><path d="M0 3 Q4.5 -2 9 3 Q4.5 8 0 3Z" fill="#f2f2f2"/><circle cx="4.5" cy="3" r="1.5" fill="#1b5b98"/></svg>
<div class="a" style="left:716px;top:352.5px;width:134px;height:16.4px;background:#353535;"></div>
<div class="a" style="left:831.2px;top:352.5px;width:1px;height:16.4px;background:#242424;"></div>
<div class="t" style="left:753px;top:356.3px;height:9.1px;line-height:9.1px;font-size:6.5px;color:#8a8a8a;transform:scaleX(0.812);">BCDEFG</div>
<svg style="left:836.2px;top:357.8px" width="9" height="6" viewBox="0 0 9 6"><path d="M0 3 Q4.5 -2 9 3 Q4.5 8 0 3Z" fill="#f2f2f2"/><circle cx="4.5" cy="3" r="1.5" fill="#353535"/></svg>
<div class="a" style="left:857px;top:232px;width:2.5px;height:124px;background:#9a9a9a;border-radius:1px"></div>
<div class="a" style="left:713px;top:477.5px;width:147px;height:16.5px;background:#282828;"></div>
<svg style="left:756px;top:481px" width="9" height="9" viewBox="0 0 9 9"><rect x="0.8" y="0.8" width="7.4" height="7.4" fill="none" stroke="#eee" stroke-width="1.6"/></svg>
<svg style="left:768px;top:481px" width="8" height="9" viewBox="0 0 8 9"><path d="M0 0H8V1.5L5 4.5L8 7.5V9H0V7.5L3 4.5L0 1.5Z" fill="#eee"/></svg>
<svg style="left:779px;top:481px" width="9" height="9" viewBox="0 0 9 9"><circle cx="4.5" cy="4.5" r="3.8" fill="none" stroke="#eee" stroke-width="1"/><path d="M4.5 0.7A3.8 3.8 0 0 0 4.5 8.3Z" fill="#eee"/></svg>
<svg style="left:806px;top:481px" width="9" height="9" viewBox="0 0 9 9"><rect x="0.5" y="0.5" width="8" height="8" fill="#bbb"/><rect x="4" y="4" width="4" height="4" fill="#333"/></svg>
<svg style="left:817px;top:481px" width="9" height="9" viewBox="0 0 9 9"><path d="M0.5 8.5V0.5H3.5L4.5 2H8.5V8.5Z" fill="none" stroke="#bbb" stroke-width="1"/></svg>
<svg style="left:828px;top:481px" width="9" height="9" viewBox="0 0 9 9"><path d="M0 0H2.4V2.4H0ZM3.3 0H5.7V2.4H3.3ZM6.6 0H9V2.4H6.6ZM0 3.3H2.4V5.7H0ZM3.3 3.3H5.7V5.7H3.3ZM6.6 3.3H9V5.7H6.6ZM0 6.6H2.4V9H0ZM3.3 6.6H5.7V9H3.3ZM6.6 6.6H9V9H6.6Z" fill="#aaa"/></svg>
<svg style="left:839px;top:481px" width="7" height="9" viewBox="0 0 7 9"><path d="M0 1.5H7M2.5 0.5H4.5M1 2.5V8.5H6V2.5M2.8 3.5V7.5M4.3 3.5V7.5" fill="none" stroke="#888" stroke-width="0.9"/></svg>
<div class="a" style="left:281px;top:133px;width:471px;height:391px;background:#383838;border-radius:4px 4px 2px 2px;box-shadow:0 2px 8px rgba(0,0,0,.35);overflow:hidden">
<div class="a" style="left:0;top:0;width:471px;height:15.5px;background:#3a3a3a"></div>
<div class="a" style="left:114px;top:16px;width:203px;height:366px;background:#2f2f2f"></div>
<div class="a" style="left:317px;top:16px;width:154px;height:344px;background:#343434"></div><div class="a" style="left:317px;top:360px;width:154px;height:22px;background:#2e2e2e"></div>
</div>
<div class="t" style="left:503px;top:136.4px;height:9.1px;line-height:9.1px;font-size:6.5px;color:#ddd;transform:scaleX(0.827);">書き出し</div>
<div class="t" style="left:742.5px;top:134.7px;height:12.6px;line-height:12.6px;font-size:9px;color:#e8e8e8;transform:scaleX(1.045);">×</div>
<div class="a" style="left:284.6px;top:152px;width:107.7px;height:10px;background:#1e1e1e;border-radius:1px"></div>
<svg style="left:286px;top:153.7px" width="6.5" height="6.5" viewBox="0 0 6 6"><circle cx="2.4" cy="2.4" r="1.8" fill="none" stroke="#ddd" stroke-width="1.1"/><path d="M3.8 3.8L5.8 5.8" stroke="#ddd" stroke-width="1.2"/></svg>
<div class="a" style="left:294.2px;top:153.3px;width:0.8px;height:7.4px;background:#ddd;"></div>
<div class="t" style="left:295.5px;top:152.8px;height:8.4px;line-height:8.4px;font-size:6px;color:#666;transform:scaleX(0.749);">検索</div>
<div class="a" style="left:283px;top:165.5px;width:104px;height:102.7px;background:#1c1c1c;"></div>
<div class="a" style="left:283px;top:167.2px;width:2.6px;height:12.4px;background:#3fe0a0;border-radius:1px"></div>
<div class="t" style="left:289.5px;top:168.4px;height:9.8px;line-height:9.8px;font-size:7px;color:#e8e8e8;font-weight:500;transform:scaleX(0.711);">JPEG</div>
<div class="a" style="left:283px;top:181.8px;width:2.6px;height:12.4px;background:#20c4dc;border-radius:1px"></div>
<div class="t" style="left:289.5px;top:183.0px;height:9.8px;line-height:9.8px;font-size:7px;color:#e8e8e8;font-weight:500;transform:scaleX(0.725);">PNG</div>
<div class="a" style="left:283px;top:196.4px;width:2.6px;height:12.4px;background:#7a68f0;border-radius:1px"></div>
<div class="t" style="left:289.5px;top:197.6px;height:9.8px;line-height:9.8px;font-size:7px;color:#e8e8e8;font-weight:500;transform:scaleX(0.685);">GIF</div>
<div class="a" style="left:283px;top:211.0px;width:2.6px;height:12.4px;background:#e86ad0;border-radius:1px"></div>
<div class="t" style="left:289.5px;top:212.2px;height:9.8px;line-height:9.8px;font-size:7px;color:#e8e8e8;font-weight:500;transform:scaleX(0.677);">TIFF</div>
<div class="a" style="left:283px;top:225.6px;width:2.6px;height:12.4px;background:#f29a4e;border-radius:1px"></div>
<div class="t" style="left:289.5px;top:226.8px;height:9.8px;line-height:9.8px;font-size:7px;color:#e8e8e8;font-weight:500;transform:scaleX(0.676);">SVG</div>
<div class="a" style="left:283px;top:240.2px;width:2.6px;height:12.4px;background:#62ece6;border-radius:1px"></div>
<div class="t" style="left:289.5px;top:241.4px;height:9.8px;line-height:9.8px;font-size:7px;color:#e8e8e8;font-weight:500;transform:scaleX(0.642);">EPS</div>
<div class="a" style="left:283px;top:253.6px;width:104px;height:14.6px;background:#3c2623;"></div>
<div class="a" style="left:283px;top:254.8px;width:2.6px;height:12.4px;background:#8e2f2c;border-radius:1px"></div>
<div class="t" style="left:289.5px;top:256.0px;height:9.8px;line-height:9.8px;font-size:7px;color:#e8e8e8;font-weight:500;transform:scaleX(0.714);">PDF</div>
<div class="a" style="left:283px;top:268.6px;width:103px;height:14.8px;background:#1b5c99;"></div>
<div class="t" style="left:287.8px;top:271.6px;height:8.8px;line-height:8.8px;font-size:6.3px;color:#f0f0f0;font-weight:500;transform:scaleX(0.675);">PDF(プリント用)</div>
<div class="a" style="left:283px;top:284.2px;width:103px;height:14.8px;background:#303030;"></div>
<div class="t" style="left:287.8px;top:287.1px;height:8.8px;line-height:8.8px;font-size:6.3px;color:#f0f0f0;font-weight:500;transform:scaleX(0.704);">PDF(プレス品質)</div>
<div class="a" style="left:283px;top:299.7px;width:103px;height:14.8px;background:#303030;"></div>
<div class="t" style="left:287.8px;top:302.7px;height:8.8px;line-height:8.8px;font-size:6.3px;color:#f0f0f0;font-weight:500;transform:scaleX(0.704);">PDF(デジタル - 小サイズ)</div>
<div class="a" style="left:283px;top:315.2px;width:103px;height:14.8px;background:#303030;"></div>
<div class="t" style="left:287.8px;top:318.2px;height:8.8px;line-height:8.8px;font-size:6.3px;color:#f0f0f0;font-weight:500;transform:scaleX(0.739);">PDF(デジタル - 高品質)</div>
<div class="a" style="left:283px;top:330.8px;width:103px;height:14.8px;background:#303030;"></div>
<div class="t" style="left:287.8px;top:333.8px;height:8.8px;line-height:8.8px;font-size:6.3px;color:#f0f0f0;font-weight:500;transform:scaleX(0.739);">PDF(書き出し用)</div>
<div class="a" style="left:283px;top:346.4px;width:103px;height:14.8px;background:#303030;"></div>
<div class="t" style="left:287.8px;top:349.3px;height:8.8px;line-height:8.8px;font-size:6.3px;color:#f0f0f0;font-weight:500;transform:scaleX(0.766);">PDF(画像の統合)</div>
<div class="a" style="left:283px;top:361.9px;width:103px;height:14.8px;background:#303030;"></div>
<div class="t" style="left:287.8px;top:364.9px;height:8.8px;line-height:8.8px;font-size:6.3px;color:#f0f0f0;font-weight:500;transform:scaleX(0.797);">PDF/X-1a:2003</div>
<div class="a" style="left:283px;top:377.5px;width:103px;height:14.8px;background:#303030;"></div>
<div class="t" style="left:287.8px;top:380.4px;height:8.8px;line-height:8.8px;font-size:6.3px;color:#f0f0f0;font-weight:500;transform:scaleX(0.802);">PDF/X-3:2003</div>
<div class="a" style="left:283px;top:393.0px;width:103px;height:14.8px;background:#303030;"></div>
<div class="t" style="left:287.8px;top:396.0px;height:8.8px;line-height:8.8px;font-size:6.3px;color:#f0f0f0;font-weight:500;transform:scaleX(0.807);">PDF/X-4</div>
<div class="a" style="left:283px;top:408.3px;width:104px;height:95.19999999999999px;background:#1c1c1c;"></div>
<div class="a" style="left:283px;top:409.5px;width:2.6px;height:12.4px;background:#5a8cf0;border-radius:1px"></div>
<div class="t" style="left:289.5px;top:410.7px;height:9.8px;line-height:9.8px;font-size:7px;color:#e8e8e8;font-weight:500;transform:scaleX(0.694);">PSD</div>
<div class="a" style="left:283px;top:424.1px;width:2.6px;height:12.4px;background:#ead824;border-radius:1px"></div>
<div class="t" style="left:289.5px;top:425.3px;height:9.8px;line-height:9.8px;font-size:7px;color:#e8e8e8;font-weight:500;transform:scaleX(0.625);">EXR</div>
<div class="a" style="left:283px;top:438.7px;width:2.6px;height:12.4px;background:#f07a92;border-radius:1px"></div>
<div class="t" style="left:289.5px;top:439.9px;height:9.8px;line-height:9.8px;font-size:7px;color:#e8e8e8;font-weight:500;transform:scaleX(0.659);">HDR</div>
<div class="a" style="left:283px;top:453.3px;width:2.6px;height:12.4px;background:#f8c840;border-radius:1px"></div>
<div class="t" style="left:289.5px;top:454.5px;height:9.8px;line-height:9.8px;font-size:7px;color:#e8e8e8;font-weight:500;transform:scaleX(0.695);">TGA</div>
<div class="a" style="left:283px;top:467.9px;width:2.6px;height:12.4px;background:#f27a4a;border-radius:1px"></div>
<div class="t" style="left:289.5px;top:469.1px;height:9.8px;line-height:9.8px;font-size:7px;color:#e8e8e8;font-weight:500;transform:scaleX(0.837);">EPUB (Fixed Layout)</div>
<div class="a" style="left:283px;top:482.5px;width:2.6px;height:12.4px;background:#94e4a6;border-radius:1px"></div>
<div class="t" style="left:289.5px;top:483.7px;height:9.8px;line-height:9.8px;font-size:7px;color:#e8e8e8;font-weight:500;transform:scaleX(0.829);">EPUB (Reflowable)</div>
<div class="a" style="left:283px;top:497.09999999999997px;width:2.6px;height:6.400000000000034px;background:#e6f048;"></div>
<div class="a" style="left:283px;top:497px;width:100px;height:6.3px;overflow:hidden"><div class="t" style="left:6.5px;top:2.6px;height:10px;line-height:10px;font-size:7px;font-weight:500;color:#e8e8e8;transform:scaleX(.78)">WEBP</div></div>
<div class="a" style="left:391px;top:175.5px;width:2px;height:255px;background:#8c8c8c;border-radius:1px"></div>
<svg style="left:337.5px;top:273px" width="8" height="11" viewBox="0 0 8 11"><path d="M0.5 0.5 V9 L2.6 7.2 L4 10.4 L5.4 9.8 L4 6.8 H6.8 Z" fill="#fff" stroke="#222" stroke-width="0.7"/></svg>
<svg style="left:395.5px;top:261.7px" width="202.5" height="143.7" viewBox="0 0 565 401"><defs><linearGradient id="pg" x1="0" y1="0" x2="1" y2="0"><stop offset="0" stop-color="#f8e000"/><stop offset="0.45" stop-color="#f2a81c"/><stop offset="1" stop-color="#e4521e"/></linearGradient><clipPath id="pc"><circle cx="415.2" cy="115.5" r="69"/></clipPath><filter id="pf" x="-20%" y="-20%" width="140%" height="140%"><feGaussianBlur stdDeviation="3.2"/></filter></defs><rect width="565" height="401" fill="#fff"/><text x="98" y="81.8" font-family="Noto Sans CJK JP, Liberation Sans, sans-serif" font-size="39.5" fill="#1a1311" textLength="162" lengthAdjust="spacingAndGlyphs">ABCDEFG</text><text x="93" y="152.6" font-family="Noto Sans CJK JP, Liberation Sans, sans-serif" font-weight="400" font-size="38" fill="#df6a35" textLength="110" lengthAdjust="spacingAndGlyphs">あいお</text><polygon points="174.0,174.0 204.9,236.0 273.4,246.2 223.9,294.7 235.4,363.0 174.0,331.0 112.6,363.0 124.1,294.7 74.6,246.2 143.1,236.0" fill="#e4007f"/><polygon points="290.2,171.2 321.1,233.2 389.6,243.4 340.1,291.9 351.6,360.2 290.2,328.2 228.8,360.2 240.3,291.9 190.8,243.4 259.3,233.2" fill="url(#pg)"/><polygon points="426.3,267.0 440.6,295.8 472.4,300.5 449.4,323.0 454.8,354.7 426.3,339.8 397.8,354.7 403.2,323.0 380.2,300.5 412.0,295.8" fill="#e4007f"/><polygon points="486.9,267.0 501.2,295.8 533.0,300.5 510.0,323.0 515.4,354.7 486.9,339.8 458.4,354.7 463.8,323.0 440.8,300.5 472.6,295.8" fill="url(#pg)"/><g clip-path="url(#pc)"><rect x="340" y="40" width="150" height="150" fill="#6b6848"/><g filter="url(#pf)"><ellipse cx="417" cy="77" rx="25" ry="30" fill="#4d7a35"/><ellipse cx="357" cy="98" rx="15" ry="24" fill="#4a6e30"/><ellipse cx="377" cy="66" rx="19" ry="11" fill="#b6ad90"/><ellipse cx="468" cy="125" rx="16" ry="30" fill="#b3a689"/><ellipse cx="455" cy="66" rx="15" ry="12" fill="#aa9e7e"/><ellipse cx="397" cy="108" rx="20" ry="18" fill="#45392a"/><ellipse cx="404" cy="169" rx="42" ry="17" fill="#3a3124"/><ellipse cx="455" cy="101" rx="10" ry="14" fill="#3a3226"/><ellipse cx="431" cy="151" rx="28" ry="13" fill="#7a7450"/><ellipse cx="380" cy="148" rx="16" ry="18" fill="#9a9072"/><ellipse cx="350" cy="130" rx="10" ry="16" fill="#3f3a28"/><ellipse cx="440" cy="118" rx="12" ry="10" fill="#5c6a38"/></g></g><rect x="388" y="60" width="50" height="5" rx="2" fill="#fff" fill-opacity=".45"/><text x="363" y="114" font-family="Liberation Sans, sans-serif" font-size="56" fill="#e8dcc4" fill-opacity="0.62" textLength="108" lengthAdjust="spacingAndGlyphs">15:46</text><circle cx="377" cy="130.5" r="6.5" fill="#fff" fill-opacity=".45"/><circle cx="415.7" cy="130.5" r="8.5" fill="none" stroke="#fff" stroke-opacity=".85" stroke-width="2.5"/><circle cx="415.7" cy="130.5" r="3" fill="#fff" fill-opacity=".8"/><circle cx="452.8" cy="130.5" r="6" fill="#fff" fill-opacity=".85"/></svg>
<div class="a" style="left:598px;top:148px;width:154px;height:15px;background:#3b2522;"></div>
<div class="a" style="left:598.3px;top:149.5px;width:4px;height:13px;background:#ea5a55;border-radius:1.5px"></div>
<div class="a" style="left:741.5px;top:153.5px;width:6.5px;height:6.5px;border:1px solid #6a5451;border-radius:1px"></div>
<svg style="left:742.5px;top:155.5px" width="4.4" height="2.6" viewBox="0 0 5 3"><path d="M0.3 0.2 H4.7 L2.5 2.9 Z" fill="#a89896"/></svg>
<div class="t" style="left:609px;top:173.4px;height:9.1px;line-height:9.1px;font-size:6.5px;color:#a8a8a8;transform:scaleX(0.962);">領域</div>
<div class="a" style="left:696px;top:173.2px;width:41.5px;height:9.6px;background:#4b4b4b;border-radius:1px"></div>
<div class="t" style="left:698px;top:173.6px;height:8.8px;line-height:8.8px;font-size:6.3px;color:#f2f2f2;font-weight:bold;transform:scaleX(0.703);">全ドキュメント</div>
<svg style="left:731.0999999999999px;top:176.89999999999998px" width="4.4" height="2.6" viewBox="0 0 5 3"><path d="M0.3 0.2 H4.7 L2.5 2.9 Z" fill="#bdbdbd"/></svg>
<div class="t" style="left:609px;top:191.4px;height:9.1px;line-height:9.1px;font-size:6.5px;color:#a8a8a8;transform:scaleX(0.780);">完了時に書き出しをプレビュー</div>
<div class="tog" style="left:714px;top:190.7px"><i></i></div>
<div class="t" style="left:603px;top:211.8px;height:9.1px;line-height:9.1px;font-size:6.5px;color:#f4f4f4;font-weight:bold;transform:scaleX(0.962);">詳細</div>
<div class="t" style="left:609px;top:228.8px;height:9.1px;line-height:9.1px;font-size:6.5px;color:#a8a8a8;transform:scaleX(0.894);">Est. file size</div>
<div class="t" style="left:709px;top:228.9px;height:8.8px;line-height:8.8px;font-size:6.3px;color:#f2f2f2;font-weight:bold;transform:scaleX(0.861);">430.4 kB</div>
<div class="t" style="left:609px;top:244.4px;height:9.1px;line-height:9.1px;font-size:6.5px;color:#a8a8a8;transform:scaleX(0.724);">ラスタライズ</div>
<div class="a" style="left:661.5px;top:244.2px;width:76.0px;height:9.6px;background:#4b4b4b;border-radius:1px"></div>
<div class="t" style="left:663.5px;top:244.6px;height:8.8px;line-height:8.8px;font-size:6.3px;color:#f2f2f2;font-weight:bold;transform:scaleX(0.724);">サポートされていないプロパティ</div>
<svg style="left:731.0999999999999px;top:247.89999999999998px" width="4.4" height="2.6" viewBox="0 0 5 3"><path d="M0.3 0.2 H4.7 L2.5 2.9 Z" fill="#bdbdbd"/></svg>
<div class="t" style="left:609px;top:262.9px;height:9.1px;line-height:9.1px;font-size:6.5px;color:#a8a8a8;transform:scaleX(0.782);">ドキュメント解像度を使用</div>
<div class="tog" style="left:714px;top:262.2px"><i></i></div>
<div class="t" style="left:609px;top:281.4px;height:9.1px;line-height:9.1px;font-size:6.5px;color:#a8a8a8;transform:scaleX(0.735);">ラスターDPI</div>
<div class="a" style="left:710px;top:281.2px;width:20px;height:9.6px;background:#1e1e1e;border-radius:1px"></div>
<div class="t" style="left:713px;top:281.6px;height:8.8px;line-height:8.8px;font-size:6.3px;color:#f2f2f2;transform:scaleX(0.855);">72</div>
<div class="a" style="left:730.6px;top:281.2px;width:7.3px;height:9.6px;background:#4b4b4b;border-radius:1px"></div>
<svg style="left:732.0px;top:284.9px" width="4.4" height="2.6" viewBox="0 0 5 3"><path d="M0.3 0.2 H4.7 L2.5 2.9 Z" fill="#bdbdbd"/></svg>
<div class="t" style="left:658px;top:297.1px;height:8.8px;line-height:8.8px;font-size:6.3px;color:#f2f2f2;font-weight:bold;transform:scaleX(0.765);">(一部の領域はラスタライズされます)</div>
<div class="t" style="left:609px;top:314.4px;height:9.1px;line-height:9.1px;font-size:6.5px;color:#a8a8a8;transform:scaleX(0.787);">画像のダウンサンプル</div>
<div class="tog on" style="left:714px;top:313.7px"><i></i></div>
<div class="t" style="left:609px;top:332.8px;height:9.1px;line-height:9.1px;font-size:6.5px;color:#a8a8a8;transform:scaleX(0.923);">最小DPI</div>
<div class="a" style="left:710px;top:332.5px;width:27.8px;height:9.6px;background:#1e1e1e;border-radius:1px"></div>
<div class="t" style="left:713px;top:332.9px;height:8.8px;line-height:8.8px;font-size:6.3px;color:#f2f2f2;transform:scaleX(0.855);">90</div>
<svg style="left:732.0px;top:336.2px" width="4.4" height="2.6" viewBox="0 0 5 3"><path d="M0.3 0.2 H4.7 L2.5 2.9 Z" fill="#bdbdbd"/></svg>
<div class="t" style="left:609px;top:350.4px;height:9.1px;line-height:9.1px;font-size:6.5px;color:#a8a8a8;transform:scaleX(0.712);">リサンプル</div>
<div class="a" style="left:705px;top:350.2px;width:32.5px;height:9.6px;background:#4b4b4b;border-radius:1px"></div>
<div class="t" style="left:707px;top:350.6px;height:8.8px;line-height:8.8px;font-size:6.3px;color:#f2f2f2;font-weight:bold;transform:scaleX(0.762);">バイリニア</div>
<svg style="left:731.0999999999999px;top:353.9px" width="4.4" height="2.6" viewBox="0 0 5 3"><path d="M0.3 0.2 H4.7 L2.5 2.9 Z" fill="#bdbdbd"/></svg>
<div class="t" style="left:609px;top:368.1px;height:9.1px;line-height:9.1px;font-size:6.5px;color:#a8a8a8;transform:scaleX(0.768);">JPEG圧縮を許可</div>
<div class="tog on" style="left:714px;top:367.4px"><i></i></div>
<div class="t" style="left:609px;top:386.2px;height:9.1px;line-height:9.1px;font-size:6.5px;color:#a8a8a8;transform:scaleX(0.962);">品質</div>
<div class="a" style="left:710px;top:386.0px;width:27.8px;height:9.6px;background:#1e1e1e;border-radius:1px"></div>
<div class="t" style="left:713px;top:386.4px;height:8.8px;line-height:8.8px;font-size:6.3px;color:#f2f2f2;transform:scaleX(0.855);">85</div>
<svg style="left:732.0px;top:389.7px" width="4.4" height="2.6" viewBox="0 0 5 3"><path d="M0.3 0.2 H4.7 L2.5 2.9 Z" fill="#bdbdbd"/></svg>
<div class="t" style="left:609px;top:403.8px;height:9.1px;line-height:9.1px;font-size:6.5px;color:#a8a8a8;transform:scaleX(0.923);">互換性</div>
<div class="a" style="left:678px;top:403.5px;width:59.5px;height:9.6px;background:#4b4b4b;border-radius:1px"></div>
<div class="t" style="left:680px;top:403.9px;height:8.8px;line-height:8.8px;font-size:6.3px;color:#f2f2f2;font-weight:bold;transform:scaleX(0.861);">PDF 1.7 (Acrobat 8)</div>
<svg style="left:731.0999999999999px;top:407.2px" width="4.4" height="2.6" viewBox="0 0 5 3"><path d="M0.3 0.2 H4.7 L2.5 2.9 Z" fill="#bdbdbd"/></svg>
<div class="t" style="left:609px;top:421.1px;height:9.1px;line-height:9.1px;font-size:6.5px;color:#a8a8a8;transform:scaleX(0.923);">色空間</div>
<div class="a" style="left:709.6px;top:420.8px;width:27.899999999999977px;height:9.6px;background:#4b4b4b;border-radius:1px"></div>
<div class="t" style="left:711.6px;top:421.2px;height:8.8px;line-height:8.8px;font-size:6.3px;color:#f2f2f2;font-weight:bold;transform:scaleX(0.786);">RGB</div>
<svg style="left:731.0999999999999px;top:424.5px" width="4.4" height="2.6" viewBox="0 0 5 3"><path d="M0.3 0.2 H4.7 L2.5 2.9 Z" fill="#bdbdbd"/></svg>
<div class="t" style="left:609px;top:438.2px;height:9.1px;line-height:9.1px;font-size:6.5px;color:#a8a8a8;transform:scaleX(0.757);">ICCプロファイル</div>
<div class="a" style="left:678px;top:438.0px;width:59.5px;height:9.6px;background:#4b4b4b;border-radius:1px"></div>
<div class="t" style="left:680px;top:438.4px;height:8.8px;line-height:8.8px;font-size:6.3px;color:#f2f2f2;font-weight:bold;transform:scaleX(0.860);">sRGB IEC61966-2.1</div>
<svg style="left:731.0999999999999px;top:441.7px" width="4.4" height="2.6" viewBox="0 0 5 3"><path d="M0.3 0.2 H4.7 L2.5 2.9 Z" fill="#bdbdbd"/></svg>
<div class="a" style="left:598px;top:452px;width:150px;height:8.5px;overflow:hidden">
<div class="t" style="left:11px;top:2.5px;height:9px;line-height:9px;font-size:6.5px;color:#777;transform:scaleX(.8)">オーバープリントを考慮する</div>
<div class="tog" style="left:116px;top:2.5px"><i></i></div>
</div>
<div class="a" style="left:749.3px;top:171px;width:2px;height:96px;background:#9a9a9a;border-radius:1px"></div>
<div class="a" style="left:598px;top:460.5px;width:154px;height:1px;background:#2a2a2a;"></div>
<div class="a" style="left:603.5px;top:464px;width:142.5px;height:10px;background:#4b4b4b;border-radius:1px"></div>
<div class="t" style="left:607px;top:464.6px;height:8.8px;line-height:8.8px;font-size:6.3px;color:#f4f4f4;font-weight:bold;transform:scaleX(0.662);">場所を尋ねる</div>
<svg style="left:739.8px;top:467.9px" width="4.4" height="2.6" viewBox="0 0 5 3"><path d="M0.3 0.2 H4.7 L2.5 2.9 Z" fill="#bdbdbd"/></svg>
<div class="t" style="left:666px;top:478.2px;height:9.5px;line-height:9.5px;font-size:6.8px;color:#f0f0f0;transform:scaleX(0.715);">エクスプローラーで表示</div>
<div class="tog" style="left:722.5px;top:477.3px"><i></i></div>
<div class="a" style="left:598px;top:492.3px;width:154px;height:1px;background:#2a2a2a;"></div>
<div class="a" style="left:667px;top:498.5px;width:38.5px;height:12.5px;background:#4a4a4a;border-radius:1.5px"></div>
<div class="t" style="left:674.5px;top:500.2px;height:9.1px;line-height:9.1px;font-size:6.5px;color:#f4f4f4;font-weight:bold;transform:scaleX(0.764);">書き出し...</div>
<div class="a" style="left:708.5px;top:498.5px;width:39px;height:12.5px;background:#4a4a4a;border-radius:1.5px"></div>
<div class="t" style="left:715.5px;top:500.2px;height:9.1px;line-height:9.1px;font-size:6.5px;color:#f4f4f4;font-weight:bold;transform:scaleX(0.769);">キャンセル</div>
<div id="right" class="a"></div>
<div class="a" style="left:860.6px;top:62px;width:2.4px;height:462px;background:#1d1d1d;"></div>
<div class="a" style="left:862px;top:61.6px;width:138px;height:13.8px;background:#232323;"></div>
<div class="a" style="left:867px;top:64.1px;width:1.2px;height:8.8px;background:#444;"></div>
<div class="a" style="left:872.5px;top:63.5px;width:16.0px;height:10px;background:#3c3c3c;border-radius:1.5px"></div>
<div class="t" style="left:874.5px;top:64.0px;height:9.1px;line-height:9.1px;font-size:6.5px;color:#fff;font-weight:bold;transform:scaleX(0.615);">カラー</div>
<div class="t" style="left:891.2px;top:64.0px;height:9.1px;line-height:9.1px;font-size:6.5px;color:#c4c4c4;transform:scaleX(0.634);">スウォッチ</div>
<div class="t" style="left:917.6px;top:64.0px;height:9.1px;line-height:9.1px;font-size:6.5px;color:#c4c4c4;transform:scaleX(0.862);">境界線</div>
<div class="t" style="left:939.8px;top:64.0px;height:9.1px;line-height:9.1px;font-size:6.5px;color:#c4c4c4;transform:scaleX(0.671);">アピアランス</div>
<div class="a" style="left:990.5px;top:64.5px;width:7.5px;height:8px;border:1px solid #c8c8c8;border-radius:2px"></div>
<svg style="left:991.8px;top:66.7px" width="5" height="4" viewBox="0 0 5 4"><path d="M0.6 0.6L2.5 3L4.4 0.6" fill="none" stroke="#f0f0f0" stroke-width="1.2"/></svg>
<div class="a" style="left:862px;top:75.4px;width:138px;height:123px;background:#353535;"></div>
<div class="a" style="left:892.5px;top:95px;width:79px;height:79px;border-radius:50%;background:conic-gradient(from 90deg,#f01428,#f08a00 8%,#f4e800 17%,#7ad020 27%,#22c050 36%,#20c8b8 45%,#28b4e8 52%,#2868d8 62%,#5a48c8 70%,#9a48c0 77%,#d838a8 85%,#f0206c 93%,#f01428)"></div>
<div class="a" style="left:901px;top:103.5px;width:62px;height:62px;border-radius:50%;background:#353535"></div>
<svg style="left:0;top:0" width="1000" height="538" viewBox="0 0 1000 538"><defs><linearGradient id="tw" gradientUnits="userSpaceOnUse" x1="925.7" y1="104.7" x2="909.5" y2="155.5"><stop offset="0" stop-color="#000"/><stop offset="1" stop-color="#fff"/></linearGradient><linearGradient id="tk" gradientUnits="userSpaceOnUse" x1="961.6" y1="143.6" x2="917.75" y2="129.6"><stop offset="0" stop-color="#ea5516" stop-opacity="1"/><stop offset="0.55" stop-color="#ea5516" stop-opacity="0.75"/><stop offset="1" stop-color="#ea5516" stop-opacity="0"/></linearGradient></defs><polygon points="961.6,143.6 925.7,104.7 909.5,155.5" fill="url(#tw)"/><polygon points="961.6,143.6 925.7,104.7 909.5,155.5" fill="url(#tk)"/><circle cx="954" cy="141" r="2.4" fill="none" stroke="#fff" stroke-width="1"/><circle cx="965" cy="144.5" r="2.4" fill="none" stroke="#fff" stroke-width="1"/><circle cx="884" cy="98.6" r="6" fill="#ea5516"/><circle cx="877" cy="92" r="4.9" fill="#353535" stroke="#fff" stroke-width="2.3"/><circle cx="873.5" cy="101.8" r="2.7" fill="#f4e8e8"/><path d="M871.8 103.5L875.2 100.1" stroke="#d83030" stroke-width="0.9"/><path d="M884.5 86.5 Q888.5 87 889 91" fill="none" stroke="#888" stroke-width="0.8"/><path d="M895.5 93.5 L896 91.5 L900 87.5 L901.8 89.3 L897.8 93.3 Z" fill="none" stroke="#aaa" stroke-width="0.9"/><path d="M900 86.5 L902 84.5 L904.3 86.8 L902.5 88.8Z" fill="#aaa"/><circle cx="909.2" cy="89" r="3.6" fill="#e8202a"/><circle cx="876.7" cy="191.7" r="3.7" fill="#ea5516"/></svg>
<div class="a" style="left:980.4px;top:91.8px;width:7.3px;height:6.9px;background:#000;"></div>
<div class="a" style="left:987.7px;top:91.8px;width:7.6px;height:6.9px;background:#fff;"></div>
<div class="t" style="left:868.3px;top:155.5px;height:7.7px;line-height:7.7px;font-size:5.5px;color:#9a9a9a;transform:scaleX(0.793);">H: 9</div>
<div class="t" style="left:868.3px;top:162.2px;height:7.7px;line-height:7.7px;font-size:5.5px;color:#9a9a9a;transform:scaleX(0.817);">S: 100</div>
<div class="t" style="left:868.3px;top:169.0px;height:7.7px;line-height:7.7px;font-size:5.5px;color:#9a9a9a;transform:scaleX(0.817);">L: 53</div>
<div class="t" style="left:964.5px;top:166.8px;height:8.4px;line-height:8.4px;font-size:6px;color:#bbb;transform:scaleX(0.897);">#</div>
<div class="a" style="left:969.5px;top:166.6px;width:24.5px;height:8.6px;background:#202020;border-radius:1px"></div>
<div class="t" style="left:971.3px;top:166.6px;height:8.8px;line-height:8.8px;font-size:6.3px;color:#f2f2f2;transform:scaleX(0.758);">EA5516</div>
<div class="t" style="left:871px;top:178.1px;height:8.4px;line-height:8.4px;font-size:6px;color:#bdbdbd;transform:scaleX(0.833);">不透明度</div>
<div class="a" style="left:885px;top:190px;width:71.5px;height:4.6px;border-radius:2.3px;background:linear-gradient(90deg,#fff,#c8c8c8 35%,#6a6a6a 75%,#3c3c3c)"></div>
<div class="a" style="left:951.5px;top:189.2px;width:6.4px;height:6.4px;border-radius:50%;border:1.2px solid #f4f4f4;background:#444"></div>
<div class="a" style="left:962.2px;top:187.3px;width:21.2px;height:8.4px;background:#202020;border-radius:1px"></div>
<div class="t" style="left:965px;top:187.1px;height:8.8px;line-height:8.8px;font-size:6.3px;color:#f2f2f2;transform:scaleX(0.784);">100 %</div>
<div class="a" style="left:984.6px;top:187.3px;width:7px;height:8.4px;background:#585858;border-radius:1px"></div>
<svg style="left:985.9px;top:190.29999999999998px" width="4.4" height="2.6" viewBox="0 0 5 3"><path d="M0.3 0.2 H4.7 L2.5 2.9 Z" fill="#ccc"/></svg>
<div class="a" style="left:862px;top:198.3px;width:138px;height:141.5px;background:#262626;"></div>
<div class="a" style="left:862px;top:198.5px;width:138px;height:17px;background:#232323;"></div>
<div class="a" style="left:867px;top:201.0px;width:1.2px;height:12px;background:#444;"></div>
<div class="a" style="left:872.5px;top:202.0px;width:25.5px;height:10px;background:#3c3c3c;border-radius:1.5px"></div>
<div class="t" style="left:874.5px;top:202.4px;height:9.1px;line-height:9.1px;font-size:6.5px;color:#fff;font-weight:bold;transform:scaleX(0.664);">パスブラシ</div>
<div class="t" style="left:901.4px;top:202.4px;height:9.1px;line-height:9.1px;font-size:6.5px;color:#c4c4c4;transform:scaleX(0.667);">クイックFX</div>
<div class="t" style="left:929.6px;top:202.4px;height:9.1px;line-height:9.1px;font-size:6.5px;color:#c4c4c4;transform:scaleX(0.654);">スタイル</div>
<div class="a" style="left:990.5px;top:203.0px;width:7.5px;height:8px;border:1px solid #c8c8c8;border-radius:2px"></div>
<svg style="left:991.8px;top:205.2px" width="5" height="4" viewBox="0 0 5 4"><path d="M0.6 0.6L2.5 3L4.4 0.6" fill="none" stroke="#f0f0f0" stroke-width="1.2"/></svg>
<div class="a" style="left:865px;top:218.2px;width:134.5px;height:9.6px;background:#1b1b1b;border-radius:1px"></div>
<svg style="left:866.8px;top:219.5px" width="7" height="7" viewBox="0 0 7 7"><circle cx="2.8" cy="2.8" r="2.1" fill="none" stroke="#eee" stroke-width="1.1"/><path d="M4.4 4.4L6.6 6.6" stroke="#eee" stroke-width="1.2"/></svg>
<div class="t" style="left:875.5px;top:218.8px;height:8.4px;line-height:8.4px;font-size:6px;color:#6a6a6a;transform:scaleX(0.832);">検索</div>
<div class="a" style="left:865px;top:231.2px;width:121.3px;height:10.3px;background:#494949;border-radius:1px"></div>
<div class="t" style="left:877.5px;top:231.7px;height:9.5px;line-height:9.5px;font-size:6.8px;color:#fff;font-weight:bold;transform:scaleX(0.670);">アクリル</div>
<svg style="left:980.3px;top:235.2px" width="4.4" height="2.6" viewBox="0 0 5 3"><path d="M0.3 0.2 H4.7 L2.5 2.9 Z" fill="#bbb"/></svg>
<svg style="left:991px;top:233.3px" width="7" height="7.5" viewBox="0 0 7 7.5"><path d="M0 0H3V2H0ZM4 0H7V2H4ZM0 2.8H3V4.8H0ZM4 2.8H7V4.8H4ZM0 5.5H3V7.5H0ZM4 5.5H7V7.5H4Z" fill="#a8a8a8"/></svg>
<svg style="left:0;top:0" width="1000" height="538" viewBox="0 0 1000 538"><defs><linearGradient id="bs" x1="0" y1="0" x2="1" y2="0"><stop offset="0" stop-color="#fff"/><stop offset=".45" stop-color="#f0f0f0"/><stop offset=".8" stop-color="#9a9a9a" stop-opacity=".8"/><stop offset="1" stop-color="#555" stop-opacity="0"/></linearGradient><clipPath id="bc"><rect x="862" y="243" width="138" height="96.5"/></clipPath></defs><g clip-path="url(#bc)">
<rect x="863" y="243.6" width="129" height="23.2" fill="#333333"/>
<path d="M885 251.5 C905 248.8 915 249.8 930 252.2 S 952 255.3 972 252.8 L972 253.6 C957 257.3 945 257.8 930 257.0 S 905 254.4 885.5 256.0 Z" fill="url(#bs)"/>
<rect x="863" y="268.0" width="129" height="23.2" fill="#333333"/>
<path d="M885 275.7 C905 273.0 915 274.0 930 276.4 S 940 279.7 960 277.2 L960 278.0 C945 281.7 945 282.4 930 281.6 S 905 279.0 885.5 280.6 Z" fill="url(#bs)"/>
<rect x="863" y="292.4" width="129" height="23.2" fill="#333333"/>
<path d="M885 299.8 C905 297.1 915 298.1 930 300.5 S 953 304.1 973 301.6 L973 302.4 C958 306.1 945 307.1 930 306.3 S 905 303.7 885.5 305.3 Z" fill="url(#bs)"/>
<rect x="863" y="316.8" width="129" height="23.2" fill="#333333"/>
<path d="M885 322.8 C905 320.1 915 321.1 930 323.5 S 953 328.5 973 326.0 L973 326.8 C958 330.5 945 332.9 930 332.1 S 905 329.5 885.5 331.1 Z" fill="url(#bs)"/>
<rect x="863.5" y="244.1" width="128" height="23" fill="none" stroke="#1e5e9c" stroke-width="1.1"/>
</g></svg>
<div class="t" style="left:872.7px;top:253.0px;height:7.7px;line-height:7.7px;font-size:5.5px;color:#8c8c8c;transform:scaleX(0.816);">128</div>
<div class="t" style="left:884px;top:259.4px;height:7.0px;line-height:7.0px;font-size:5px;color:#b0b0b0;transform:scaleX(0.705);">アクリルストローク01</div>
<div class="t" style="left:872.7px;top:277.3px;height:7.7px;line-height:7.7px;font-size:5.5px;color:#8c8c8c;transform:scaleX(0.816);">128</div>
<div class="t" style="left:884px;top:283.8px;height:7.0px;line-height:7.0px;font-size:5px;color:#b0b0b0;transform:scaleX(0.705);">アクリルストローク02</div>
<div class="t" style="left:872.7px;top:301.7px;height:7.7px;line-height:7.7px;font-size:5.5px;color:#8c8c8c;transform:scaleX(0.816);">128</div>
<div class="t" style="left:884px;top:308.2px;height:7.0px;line-height:7.0px;font-size:5px;color:#b0b0b0;transform:scaleX(0.705);">アクリルストローク03</div>
<div class="t" style="left:872.7px;top:326.1px;height:7.7px;line-height:7.7px;font-size:5.5px;color:#8c8c8c;transform:scaleX(0.816);">128</div>
<div class="t" style="left:884px;top:332.6px;height:7.0px;line-height:7.0px;font-size:5px;color:#b0b0b0;transform:scaleX(0.705);">アクリルストローク04</div>
<div class="a" style="left:862px;top:333px;width:138px;height:6.5px;overflow:hidden"><div class="t" style="left:22px;top:0.6px;height:7px;line-height:7px;font-size:5px;color:#b0b0b0;transform:scaleX(.74)">アクリルストローク04</div></div>
<div class="a" style="left:996.2px;top:253px;width:2.2px;height:18px;background:#b0b0b0;border-radius:1px"></div>
<svg style="left:994.5px;top:278.5px" width="6" height="6" viewBox="0 0 6 6"><path d="M0 3 Q3 -0.5 6 3 Q3 6.5 0 3Z" fill="#ddd"/><circle cx="3" cy="3" r="1.2" fill="#333"/></svg>
<div class="a" style="left:862px;top:339.5px;width:138px;height:14.5px;background:#232323;"></div>
<div class="a" style="left:867px;top:342.0px;width:1.2px;height:9.5px;background:#444;"></div>
<div class="t" style="left:874.6px;top:342.2px;height:9.1px;line-height:9.1px;font-size:6.5px;color:#c4c4c4;transform:scaleX(0.831);">変形</div>
<div class="a" style="left:889px;top:341.75px;width:24.5px;height:10px;background:#3c3c3c;border-radius:1.5px"></div>
<div class="t" style="left:891px;top:342.2px;height:9.1px;line-height:9.1px;font-size:6.5px;color:#fff;font-weight:bold;transform:scaleX(0.631);">ナビゲータ</div>
<div class="t" style="left:917.3px;top:342.2px;height:9.1px;line-height:9.1px;font-size:6.5px;color:#c4c4c4;transform:scaleX(0.823);">履歴</div>
<div class="a" style="left:990.5px;top:342.75px;width:7.5px;height:8px;border:1px solid #c8c8c8;border-radius:2px"></div>
<svg style="left:991.8px;top:344.95px" width="5" height="4" viewBox="0 0 5 4"><path d="M0.6 0.6L2.5 3L4.4 0.6" fill="none" stroke="#f0f0f0" stroke-width="1.2"/></svg>
<div class="a" style="left:862px;top:354px;width:138px;height:170px;background:#333;"></div>
<div class="a" style="left:871.2px;top:361.8px;width:9.2px;height:8px;background:#242424;border-radius:1.5px"></div>
<div class="a" style="left:873px;top:365.3px;width:5.6px;height:1.1px;background:#f0f0f0;"></div>
<div class="a" style="left:883.3px;top:361.6px;width:70.3px;height:2px;background:#1e1e1e;border-radius:1px"></div>
<div class="a" style="left:883.3px;top:361.4px;width:54px;height:2.4px;background:#1b70c2;border-radius:1px"></div>
<div class="a" style="left:935.3px;top:360.2px;width:3.6px;height:5.4px;background:#f4f4f4;border-radius:1px"></div>
<div class="a" style="left:884.5px;top:369px;width:0.8px;height:2px;background:#5a5a5a;"></div>
<div class="a" style="left:887.5px;top:369px;width:0.8px;height:2px;background:#5a5a5a;"></div>
<div class="a" style="left:896.5px;top:369px;width:0.8px;height:2px;background:#5a5a5a;"></div>
<div class="a" style="left:907px;top:369px;width:0.8px;height:2px;background:#5a5a5a;"></div>
<div class="a" style="left:910px;top:369px;width:0.8px;height:2px;background:#5a5a5a;"></div>
<div class="a" style="left:918px;top:369px;width:0.8px;height:2px;background:#5a5a5a;"></div>
<div class="a" style="left:924.5px;top:369px;width:0.8px;height:2px;background:#5a5a5a;"></div>
<div class="a" style="left:936px;top:369px;width:0.8px;height:2px;background:#5a5a5a;"></div>
<div class="a" style="left:941px;top:369px;width:0.8px;height:2px;background:#5a5a5a;"></div>
<div class="a" style="left:945px;top:369px;width:0.8px;height:2px;background:#5a5a5a;"></div>
<div class="a" style="left:952.5px;top:369px;width:0.8px;height:2px;background:#5a5a5a;"></div>
<div class="a" style="left:957.2px;top:361.8px;width:8.8px;height:8.4px;background:#242424;border-radius:50%"></div>
<div class="a" style="left:958.8px;top:365.5px;width:5.6px;height:1.1px;background:#f0f0f0;"></div>
<div class="a" style="left:961.05px;top:363.2px;width:1.1px;height:5.6px;background:#f0f0f0;"></div>
<div class="a" style="left:969.5px;top:361px;width:25.5px;height:9px;background:#222;border-radius:1px"></div>
<div class="t" style="left:972.4px;top:361.2px;height:8.8px;line-height:8.8px;font-size:6.3px;color:#f2f2f2;font-weight:bold;transform:scaleX(0.840);">149 %</div>
<svg style="left:865.4px;top:402px" width="132.4" height="94" viewBox="0 0 565 401"><defs><linearGradient id="ng" x1="0" y1="0" x2="1" y2="0"><stop offset="0" stop-color="#f8e000"/><stop offset="0.45" stop-color="#f2a81c"/><stop offset="1" stop-color="#e4521e"/></linearGradient><clipPath id="nc"><circle cx="415.2" cy="115.5" r="69"/></clipPath><filter id="nf" x="-20%" y="-20%" width="140%" height="140%"><feGaussianBlur stdDeviation="3.2"/></filter></defs><rect width="565" height="401" fill="#fff"/><text x="98" y="81.8" font-family="Noto Sans CJK JP, Liberation Sans, sans-serif" font-size="39.5" fill="#1a1311" textLength="162" lengthAdjust="spacingAndGlyphs">ABCDEFG</text><text x="93" y="152.6" font-family="Noto Sans CJK JP, Liberation Sans, sans-serif" font-weight="400" font-size="38" fill="#df6a35" textLength="110" lengthAdjust="spacingAndGlyphs">あいお</text><polygon points="174.0,174.0 204.9,236.0 273.4,246.2 223.9,294.7 235.4,363.0 174.0,331.0 112.6,363.0 124.1,294.7 74.6,246.2 143.1,236.0" fill="#e4007f"/><polygon points="290.2,171.2 321.1,233.2 389.6,243.4 340.1,291.9 351.6,360.2 290.2,328.2 228.8,360.2 240.3,291.9 190.8,243.4 259.3,233.2" fill="url(#ng)"/><polygon points="426.3,267.0 440.6,295.8 472.4,300.5 449.4,323.0 454.8,354.7 426.3,339.8 397.8,354.7 403.2,323.0 380.2,300.5 412.0,295.8" fill="#e4007f"/><polygon points="486.9,267.0 501.2,295.8 533.0,300.5 510.0,323.0 515.4,354.7 486.9,339.8 458.4,354.7 463.8,323.0 440.8,300.5 472.6,295.8" fill="url(#ng)"/><g clip-path="url(#nc)"><rect x="340" y="40" width="150" height="150" fill="#6b6848"/><g filter="url(#nf)"><ellipse cx="417" cy="77" rx="25" ry="30" fill="#4d7a35"/><ellipse cx="357" cy="98" rx="15" ry="24" fill="#4a6e30"/><ellipse cx="377" cy="66" rx="19" ry="11" fill="#b6ad90"/><ellipse cx="468" cy="125" rx="16" ry="30" fill="#b3a689"/><ellipse cx="455" cy="66" rx="15" ry="12" fill="#aa9e7e"/><ellipse cx="397" cy="108" rx="20" ry="18" fill="#45392a"/><ellipse cx="404" cy="169" rx="42" ry="17" fill="#3a3124"/><ellipse cx="455" cy="101" rx="10" ry="14" fill="#3a3226"/><ellipse cx="431" cy="151" rx="28" ry="13" fill="#7a7450"/><ellipse cx="380" cy="148" rx="16" ry="18" fill="#9a9072"/><ellipse cx="350" cy="130" rx="10" ry="16" fill="#3f3a28"/><ellipse cx="440" cy="118" rx="12" ry="10" fill="#5c6a38"/></g></g><rect x="388" y="60" width="50" height="5" rx="2" fill="#fff" fill-opacity=".45"/><text x="363" y="114" font-family="Liberation Sans, sans-serif" font-size="56" fill="#e8dcc4" fill-opacity="0.62" textLength="108" lengthAdjust="spacingAndGlyphs">15:46</text><circle cx="377" cy="130.5" r="6.5" fill="#fff" fill-opacity=".45"/><circle cx="415.7" cy="130.5" r="8.5" fill="none" stroke="#fff" stroke-opacity=".85" stroke-width="2.5"/><circle cx="415.7" cy="130.5" r="3" fill="#fff" fill-opacity=".8"/><circle cx="452.8" cy="130.5" r="6" fill="#fff" fill-opacity=".85"/></svg>
<div id="status" class="a"></div>
<div class="a" style="left:0px;top:524px;width:1000px;height:0.8px;background:#262626;"></div>
<div class="a" style="left:0px;top:536.6px;width:1000px;height:1.4px;background:#4c4c4c;"></div>
<svg style="left:4px;top:529.5px" width="16" height="6" viewBox="0 0 16 6"><path d="M0.5 0V6" stroke="#9a9a9a" stroke-width="1"/><path d="M5 0V6L1.2 3Z" fill="#9a9a9a"/><path d="M14 0V6L10.2 3Z" fill="#9a9a9a"/></svg>
<div class="t" style="left:35.5px;top:528.0px;height:9.1px;line-height:9.1px;font-size:6.5px;color:#e8e8e8;font-weight:bold;transform:scaleX(0.909);">1 / 1</div>
<svg style="left:63px;top:529.5px" width="17" height="6" viewBox="0 0 17 6"><path d="M1 0V6L5 3Z" fill="#f0f0f0"/><path d="M10.5 0V6L14.3 3Z" fill="#9a9a9a"/><path d="M15.2 0V6" stroke="#9a9a9a" stroke-width="1"/></svg>
<svg style="left:83px;top:528.5px" width="7" height="8" viewBox="0 0 7 8"><rect x="0.5" y="0.5" width="6" height="7" fill="none" stroke="#686868" stroke-width="1"/><path d="M0.5 2.5H6.5" stroke="#686868"/></svg>
<svg style="left:93.5px;top:528.5px" width="8" height="8" viewBox="0 0 8 8"><rect x="0.5" y="0.5" width="5" height="6" fill="none" stroke="#ddd" stroke-width="1"/><rect x="2.5" y="2" width="5" height="6" fill="#393939" stroke="#ddd" stroke-width="1"/></svg>
<div class="t" style="left:112px;top:528.1px;height:9.1px;line-height:9.1px;font-size:6.5px;color:#aaa;transform:scaleX(0.809);">&#x27;あいお&#x27;が選択されています。</div>
<div class="t" style="left:182.5px;top:528.1px;height:9.1px;line-height:9.1px;font-size:6.5px;color:#f0f0f0;font-weight:bold;transform:scaleX(0.681);">ドラッグ</div>
<div class="t" style="left:201.0px;top:528.1px;height:9.1px;line-height:9.1px;font-size:6.5px;color:#aaa;transform:scaleX(0.830);">で選択範囲を移動します。</div>
<div class="t" style="left:266.0px;top:528.1px;height:9.1px;line-height:9.1px;font-size:6.5px;color:#f0f0f0;font-weight:bold;transform:scaleX(0.777);">クリック</div>
<div class="t" style="left:287.0px;top:528.1px;height:9.1px;line-height:9.1px;font-size:6.5px;color:#aaa;transform:scaleX(0.779);">で別のオブジェクトを選択します。空の領域を</div>
<div class="t" style="left:393.7px;top:528.1px;height:9.1px;line-height:9.1px;font-size:6.5px;color:#f0f0f0;font-weight:bold;transform:scaleX(0.712);">クリック</div>
<div class="t" style="left:413.0px;top:528.1px;height:9.1px;line-height:9.1px;font-size:6.5px;color:#aaa;transform:scaleX(0.785);">すると、選択が解除されます。</div>
<div class="t" style="left:484.5px;top:528.1px;height:9.1px;line-height:9.1px;font-size:6.5px;color:#f0f0f0;font-weight:bold;transform:scaleX(0.823);">返す</div>
<div class="t" style="left:496.0px;top:528.1px;height:9.1px;line-height:9.1px;font-size:6.5px;color:#aaa;transform:scaleX(0.834);">で移動/複製の値を入力します。</div>
</body>
</html>
